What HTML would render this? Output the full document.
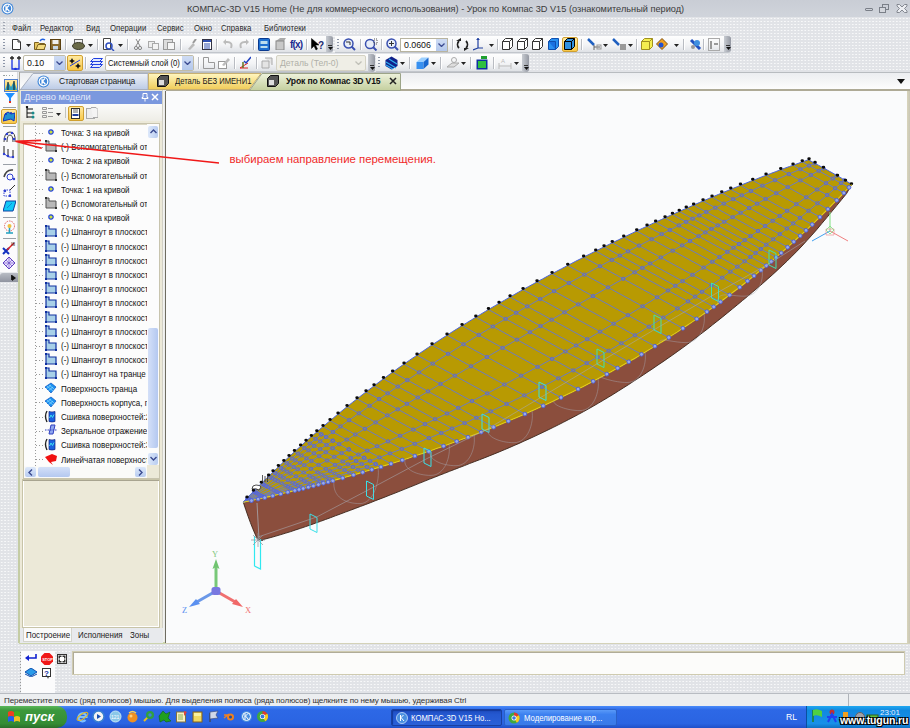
<!DOCTYPE html>
<html><head><meta charset="utf-8">
<style>
*{margin:0;padding:0;box-sizing:border-box}
html,body{width:910px;height:728px;overflow:hidden;background:#e7e9ec;font-family:"Liberation Sans",sans-serif;}
.a{position:absolute}
.tx{white-space:nowrap;line-height:1}
.pat{background-color:#e1e3e7;background-image:radial-gradient(rgba(255,255,255,.75) 0.8px,transparent 1.1px);background-size:3.4px 3px}
.tb{background:linear-gradient(#fefefe,#f3f4f6 55%,#dfe2e6);border-bottom:1px solid #c2c6cc;border-right:1px solid #c8ccd2;border-radius:0 3px 3px 0}
.row{position:absolute;left:61px;font-size:8.8px;color:#111;white-space:nowrap;line-height:1;transform:scaleX(.91);transform-origin:0 0}
</style></head><body>

<div class="a" style="left:0px;top:0px;width:910px;height:728px;background:#e8eaed"></div>
<div class="a pat" style="left:0;top:17px;width:910px;height:55px"></div>
<div class="a" style="left:0px;top:0px;width:910px;height:17px;background:linear-gradient(#c9cdd5,#d0d4db)"></div>
<svg class="a" style="left:1px;top:2px;" width="13" height="13" viewBox="0 0 13 13"><circle cx="6.5" cy="6.5" r="6" fill="#3f86d8"/><circle cx="6.5" cy="6.5" r="4.3" fill="none" stroke="#fff" stroke-width="1.2"/><path d="M5,3.5v6M5,6.5l3,-3M5.5,6l3,3.5" stroke="#fff" stroke-width="1.2" fill="none"/></svg>
<div class="a tx" style="left:187px;top:5px;font-size:9.2px;color:#3a3a3a">КОМПАС-3D V15 Home (Не для коммерческого использования) - Урок по Компас 3D V15 (ознакомительный период)</div>
<div class="a" style="left:865px;top:8px;width:8px;height:3px;border:1px solid #7a7f88;border-radius:1px"></div>
<svg class="a" style="left:879px;top:4px;" width="11" height="10" viewBox="0 0 11 10"><rect x="3.5" y="0.5" width="6" height="5" fill="none" stroke="#7a7f88"/><rect x="0.5" y="3.5" width="6" height="5" fill="#d3d6dc" stroke="#7a7f88"/></svg>
<svg class="a" style="left:896px;top:3px;" width="12" height="11" viewBox="0 0 12 11"><path d="M1,1.5h2.5l2.5,2.5 2.5-2.5h2.5v1.5l-2.5,2.5 2.5,2.5v1.5h-2.5l-2.5-2.5-2.5,2.5h-2.5v-1.5l2.5-2.5-2.5-2.5z" fill="#eceef2" stroke="#7a7f88" stroke-width="0.9"/></svg>
<div class="a" style="left:3px;top:22px;width:2px;height:10px;background:repeating-linear-gradient(#a0a6b2 0 1px,transparent 1px 3px)"></div>
<div class="a tx" style="left:12px;top:24px;font-size:9px;color:#2a2a2a;transform:scaleX(.86);transform-origin:0 0">Файл</div>
<div class="a tx" style="left:40px;top:24px;font-size:9px;color:#2a2a2a;transform:scaleX(.86);transform-origin:0 0">Редактор</div>
<div class="a tx" style="left:86px;top:24px;font-size:9px;color:#2a2a2a;transform:scaleX(.86);transform-origin:0 0">Вид</div>
<div class="a tx" style="left:110px;top:24px;font-size:9px;color:#2a2a2a;transform:scaleX(.86);transform-origin:0 0">Операции</div>
<div class="a tx" style="left:157px;top:24px;font-size:9px;color:#2a2a2a;transform:scaleX(.86);transform-origin:0 0">Сервис</div>
<div class="a tx" style="left:194px;top:24px;font-size:9px;color:#2a2a2a;transform:scaleX(.86);transform-origin:0 0">Окно</div>
<div class="a tx" style="left:221px;top:24px;font-size:9px;color:#2a2a2a;transform:scaleX(.86);transform-origin:0 0">Справка</div>
<div class="a tx" style="left:264px;top:24px;font-size:9px;color:#2a2a2a;transform:scaleX(.86);transform-origin:0 0">Библиотеки</div>
<div class="a tb" style="left:0;top:36px;width:333px;height:17px"></div>
<div class="a tb" style="left:335px;top:36px;width:396px;height:17px"></div>
<div class="a tb" style="left:0;top:54px;width:375px;height:18px"></div>
<div class="a tb" style="left:376px;top:54px;width:153px;height:18px"></div>
<div class="a" style="left:3px;top:39px;width:2px;height:12px;background:repeating-linear-gradient(#8d96a8 0 1px,transparent 1px 3px)"></div>
<div class="a" style="left:337px;top:39px;width:2px;height:12px;background:repeating-linear-gradient(#8d96a8 0 1px,transparent 1px 3px)"></div>
<div class="a" style="left:3px;top:57px;width:2px;height:12px;background:repeating-linear-gradient(#8d96a8 0 1px,transparent 1px 3px)"></div>
<div class="a" style="left:378px;top:57px;width:2px;height:12px;background:repeating-linear-gradient(#8d96a8 0 1px,transparent 1px 3px)"></div>
<div class="a" style="left:326px;top:36px;width:7px;height:16px;background:linear-gradient(90deg,#c8ccd2,#9498a2);border-radius:0 3px 3px 0"></div>
<div class="a" style="left:328px;top:45px;width:4px;height:1px;background:#333"></div>
<svg class="a" style="left:327.5px;top:47px;" width="5" height="3" viewBox="0 0 5 3"><path d="M0,0h5l-2.5,3z" fill="#111"/></svg>
<div class="a" style="left:724px;top:36px;width:7px;height:16px;background:linear-gradient(90deg,#c8ccd2,#9498a2);border-radius:0 3px 3px 0"></div>
<div class="a" style="left:726px;top:45px;width:4px;height:1px;background:#333"></div>
<svg class="a" style="left:725.5px;top:47px;" width="5" height="3" viewBox="0 0 5 3"><path d="M0,0h5l-2.5,3z" fill="#111"/></svg>
<div class="a" style="left:368px;top:54px;width:7px;height:18px;background:linear-gradient(90deg,#c8ccd2,#9498a2);border-radius:0 3px 3px 0"></div>
<div class="a" style="left:370px;top:65px;width:4px;height:1px;background:#333"></div>
<svg class="a" style="left:369.5px;top:67px;" width="5" height="3" viewBox="0 0 5 3"><path d="M0,0h5l-2.5,3z" fill="#111"/></svg>
<div class="a" style="left:522px;top:54px;width:7px;height:18px;background:linear-gradient(90deg,#c8ccd2,#9498a2);border-radius:0 3px 3px 0"></div>
<div class="a" style="left:524px;top:65px;width:4px;height:1px;background:#333"></div>
<svg class="a" style="left:523.5px;top:67px;" width="5" height="3" viewBox="0 0 5 3"><path d="M0,0h5l-2.5,3z" fill="#111"/></svg>
<svg class="a" style="left:12px;top:39px;" width="9" height="11" viewBox="0 0 9 11"><path d="M0.5,0.5h5.5l2.5,2.5v7.5h-8z" fill="#fff" stroke="#333"/><path d="M6,0.5v2.5h2.5" fill="none" stroke="#333"/></svg>
<svg class="a" style="left:26px;top:44px;" width="5" height="3" viewBox="0 0 5 3"><path d="M0,0h5l-2.5,3z" fill="#222"/></svg>
<svg class="a" style="left:34px;top:38px;" width="12" height="12" viewBox="0 0 12 12"><path d="M0.5,4.5h4l1,1h5v6h-10z" fill="#e8c860" stroke="#7a6020"/><path d="M2,11.5l2-5h8l-2,5z" fill="#f4dc80" stroke="#7a6020"/><path d="M6,3q2-3 5-1" stroke="#2060e0" stroke-width="1.5" fill="none"/></svg>
<svg class="a" style="left:50px;top:39px;" width="11" height="11" viewBox="0 0 11 11"><rect x="0.5" y="0.5" width="10" height="10" fill="#8a6a30" stroke="#5a4010"/><rect x="2.5" y="1" width="6" height="4" fill="#f0f0f0"/><rect x="3" y="7" width="5" height="3.5" fill="#c8d8e8"/></svg>
<div class="a" style="left:65px;top:39px;width:1px;height:11px;background:#b9bcc2;box-shadow:1px 0 0 #fff"></div>
<svg class="a" style="left:72px;top:39px;" width="13" height="11" viewBox="0 0 13 11"><rect x="2.5" y="0.5" width="8" height="4" fill="#eee" stroke="#666"/><ellipse cx="6.5" cy="7" rx="6" ry="3.5" fill="#6a6a48" stroke="#3a3a28"/></svg>
<svg class="a" style="left:88px;top:44px;" width="5" height="3" viewBox="0 0 5 3"><path d="M0,0h5l-2.5,3z" fill="#222"/></svg>
<div class="a" style="left:97px;top:39px;width:1px;height:11px;background:#b9bcc2;box-shadow:1px 0 0 #fff"></div>
<svg class="a" style="left:103px;top:38px;" width="12" height="13" viewBox="0 0 12 13"><path d="M0.5,0.5h7v11h-7z" fill="#fff" stroke="#444"/><circle cx="6" cy="8" r="3" fill="none" stroke="#3050c0" stroke-width="1.5"/><path d="M8,10l3,3" stroke="#3050c0" stroke-width="1.5"/></svg>
<svg class="a" style="left:118px;top:44px;" width="5" height="3" viewBox="0 0 5 3"><path d="M0,0h5l-2.5,3z" fill="#222"/></svg>
<div class="a" style="left:127px;top:39px;width:1px;height:11px;background:#b9bcc2;box-shadow:1px 0 0 #fff"></div>
<svg class="a" style="left:134px;top:39px;" width="8" height="11" viewBox="0 0 8 11"><path d="M2,0l4,7M6,0l-4,7" stroke="#888" stroke-width="1"/><circle cx="2" cy="9" r="1.6" fill="none" stroke="#888"/><circle cx="6" cy="9" r="1.6" fill="none" stroke="#888"/></svg>
<svg class="a" style="left:148px;top:39px;" width="11" height="11" viewBox="0 0 11 11"><rect x="0.5" y="2.5" width="6" height="6" fill="#eee" stroke="#aaa"/><rect x="4.5" y="4.5" width="6" height="6" fill="#f4f4f4" stroke="#aaa"/></svg>
<svg class="a" style="left:163px;top:38px;" width="12" height="12" viewBox="0 0 12 12"><rect x="0.5" y="1.5" width="9" height="10" fill="#ddd" stroke="#999"/><rect x="4.5" y="4.5" width="7" height="7" fill="#f6f6f6" stroke="#999"/></svg>
<div class="a" style="left:180px;top:39px;width:1px;height:11px;background:#b9bcc2;box-shadow:1px 0 0 #fff"></div>
<svg class="a" style="left:187px;top:39px;" width="10" height="11" viewBox="0 0 10 11"><path d="M1,10l5-6 2,2-5,5z" fill="#bbb"/><path d="M6,4l3-4" stroke="#999" stroke-width="2"/></svg>
<svg class="a" style="left:202px;top:39px;" width="10" height="11" viewBox="0 0 10 11"><rect x="0.5" y="0.5" width="9" height="10" fill="#fff" stroke="#334"/><rect x="1" y="1" width="8" height="2" fill="#3050b0"/><path d="M2,5h6M2,7h6M2,9h6" stroke="#3050b0"/></svg>
<div class="a" style="left:216px;top:39px;width:1px;height:11px;background:#b9bcc2;box-shadow:1px 0 0 #fff"></div>
<svg class="a" style="left:223px;top:39px;" width="10" height="10" viewBox="0 0 10 10"><path d="M8,9q2-6-4-6h-2" stroke="#bbb" stroke-width="2" fill="none"/><path d="M0,3l3-3v6z" fill="#bbb"/></svg>
<svg class="a" style="left:239px;top:39px;" width="10" height="10" viewBox="0 0 10 10"><path d="M2,9q-2-6 4-6h2" stroke="#bbb" stroke-width="2" fill="none"/><path d="M10,3l-3-3v6z" fill="#bbb"/></svg>
<div class="a" style="left:253px;top:39px;width:1px;height:11px;background:#b9bcc2;box-shadow:1px 0 0 #fff"></div>
<svg class="a" style="left:258px;top:38px;" width="12" height="13" viewBox="0 0 12 13"><rect x="0.5" y="0.5" width="11" height="12" rx="1" fill="#1e6fd0" stroke="#0a3a90"/><rect x="2.5" y="3" width="7" height="3" fill="#bde"/><rect x="2.5" y="8" width="7" height="2" fill="#bde"/></svg>
<svg class="a" style="left:275px;top:38px;" width="12" height="12" viewBox="0 0 12 12"><path d="M1,3l4-3h6l-2,3z" fill="#aaa"/><rect x="1" y="3" width="8" height="9" fill="#c8c8c8" stroke="#888"/></svg>
<div class="a tx" style="left:290px;top:40px;font-size:10px;color:#1a2a90;font-weight:bold;letter-spacing:-0.8px">f(x)</div>
<div class="a" style="left:306px;top:39px;width:1px;height:11px;background:#b9bcc2;box-shadow:1px 0 0 #fff"></div>
<svg class="a" style="left:311px;top:38px;" width="13" height="13" viewBox="0 0 13 13"><path d="M0.5,0.5v10l2.5-2.5 2,4 1.5-1-2-4h3.5z" fill="#000" stroke="#000" stroke-width="0.5"/><text x="7" y="11" font-size="10" font-weight="bold" fill="#1a2a70" font-family="Liberation Sans">?</text></svg>
<svg class="a" style="left:343px;top:38px;" width="13" height="13" viewBox="0 0 13 13"><circle cx="5.5" cy="5.5" r="4.5" fill="#e8eef8" stroke="#3a50b0" stroke-width="1.5"/><path d="M8.5,8.5l3.5,3.5" stroke="#3a50b0" stroke-width="2"/><path d="M3,4h4v3" stroke="#333" fill="none"/></svg>
<div class="a" style="left:360px;top:39px;width:1px;height:11px;background:#b9bcc2;box-shadow:1px 0 0 #fff"></div>
<svg class="a" style="left:364px;top:38px;" width="14" height="13" viewBox="0 0 14 13"><circle cx="6" cy="6" r="4.5" fill="#e8eef8" stroke="#3a50b0" stroke-width="1.5"/><path d="M9,9l3.5,3.5" stroke="#3a50b0" stroke-width="2"/><rect x="10" y="1" width="3" height="5" fill="none" stroke="#555" stroke-dasharray="1 1"/></svg>
<div class="a" style="left:381px;top:39px;width:1px;height:11px;background:#b9bcc2;box-shadow:1px 0 0 #fff"></div>
<svg class="a" style="left:386px;top:38px;" width="13" height="13" viewBox="0 0 13 13"><circle cx="5.5" cy="5.5" r="4.5" fill="#e8eef8" stroke="#3a50b0" stroke-width="1.5"/><path d="M8.5,8.5l3.5,3.5" stroke="#3a50b0" stroke-width="2"/><path d="M3,5.5h5M5.5,3v5" stroke="#333"/></svg>
<div class="a" style="left:400px;top:38px;width:48px;height:14px;background:#fff;border:1px solid #b8b4a0"></div>
<div class="a tx" style="left:404px;top:41px;font-size:8.8px;color:#111">0.0606</div>
<div class="a" style="left:436px;top:39px;width:11px;height:12px;background:linear-gradient(#cfdcf4,#b4c8ec)"></div>
<svg class="a" style="left:438px;top:43px;" width="7" height="4" viewBox="0 0 7 4"><path d="M0.5,0.5l3,3 3-3" stroke="#3a4a90" stroke-width="1.3" fill="none"/></svg>
<div class="a" style="left:452px;top:39px;width:1px;height:11px;background:#b9bcc2;box-shadow:1px 0 0 #fff"></div>
<svg class="a" style="left:456px;top:38px;" width="13" height="13" viewBox="0 0 13 13"><path d="M3,3a5,5 0 0,0 0,7M10,3a5,5 0 0,1 0,7" stroke="#222" stroke-width="1.8" fill="none"/><path d="M0,3h5v-3zM13,10h-5v3z" fill="#222"/></svg>
<svg class="a" style="left:473px;top:38px;" width="10" height="13" viewBox="0 0 10 13"><path d="M5,0v10M5,10l-5,2M5,10h5" stroke="#2040a0" stroke-width="1.2"/><path d="M3,2l2-2 2,2z" fill="#2040a0"/></svg>
<svg class="a" style="left:489px;top:44px;" width="5" height="3" viewBox="0 0 5 3"><path d="M0,0h5l-2.5,3z" fill="#222"/></svg>
<div class="a" style="left:497px;top:39px;width:1px;height:11px;background:#b9bcc2;box-shadow:1px 0 0 #fff"></div>
<svg class="a" style="left:502px;top:38px;" width="11" height="12" viewBox="0 0 11 12"><path d="M0.5,3.5l3-3h7v8l-3,3h-7z M0.5,3.5h7v8M7.5,3.5l3-3" fill="#fff" stroke="#333"/></svg>
<svg class="a" style="left:517px;top:38px;" width="11" height="12" viewBox="0 0 11 12"><path d="M0.5,3.5l3-3h7v8l-3,3h-7z M0.5,3.5h7v8M7.5,3.5l3-3" fill="#fff" stroke="#333"/></svg>
<svg class="a" style="left:532px;top:38px;" width="11" height="12" viewBox="0 0 11 12"><path d="M0.5,3.5l3-3h7v8l-3,3h-7z M0.5,3.5h7v8M7.5,3.5l3-3" fill="#fff" stroke="#333"/></svg>
<svg class="a" style="left:548px;top:38px;" width="11" height="12" viewBox="0 0 11 12"><path d="M0.5,3.5l3-3h7v8l-3,3h-7z" fill="#2a90f0" stroke="#1050b0"/><path d="M0.5,3.5h7v8" fill="#1a70e0" stroke="#1050b0"/></svg>
<div class="a" style="left:562px;top:37px;width:16px;height:15px;background:linear-gradient(#ffe9a0,#f8c848);border:1px solid #d0a030;border-radius:2px"></div>
<svg class="a" style="left:564px;top:38px;" width="12" height="12" viewBox="0 0 12 12"><path d="M0.5,3.5l3-3h7v8l-3,3h-7z" fill="#3090e0" stroke="#000"/><path d="M0.5,3.5h7v8M7.5,3.5l3-3" fill="none" stroke="#000"/></svg>
<div class="a" style="left:581px;top:39px;width:1px;height:11px;background:#b9bcc2;box-shadow:1px 0 0 #fff"></div>
<svg class="a" style="left:587px;top:38px;" width="15" height="13" viewBox="0 0 15 13"><path d="M1,1l6,6" stroke="#2060c0" stroke-width="2.5"/><path d="M7,7v5M7,9h6" stroke="#666"/><rect x="10" y="7" width="4" height="4" fill="none" stroke="#999"/></svg>
<svg class="a" style="left:603px;top:44px;" width="5" height="3" viewBox="0 0 5 3"><path d="M0,0h5l-2.5,3z" fill="#222"/></svg>
<svg class="a" style="left:612px;top:38px;" width="15" height="13" viewBox="0 0 15 13"><path d="M1,1l6,6" stroke="#2060c0" stroke-width="2.5"/><rect x="8" y="6" width="6" height="6" fill="#999"/></svg>
<svg class="a" style="left:628px;top:44px;" width="5" height="3" viewBox="0 0 5 3"><path d="M0,0h5l-2.5,3z" fill="#222"/></svg>
<div class="a" style="left:636px;top:39px;width:1px;height:11px;background:#b9bcc2;box-shadow:1px 0 0 #fff"></div>
<svg class="a" style="left:641px;top:38px;" width="12" height="12" viewBox="0 0 12 12"><path d="M0.5,3.5l3-3h8v8l-3,3h-8z" fill="#f4ee50" stroke="#a09020"/><path d="M0.5,3.5h8v8M8.5,3.5l3-3" fill="none" stroke="#a09020"/></svg>
<svg class="a" style="left:656px;top:38px;" width="12" height="12" viewBox="0 0 12 12"><path d="M0.5,6l5.5-5.5 5.5,5.5-5.5,5.5z" fill="#f0a020" stroke="#805010"/><circle cx="5" cy="7" r="2.5" fill="#2050d0"/></svg>
<svg class="a" style="left:674px;top:44px;" width="5" height="3" viewBox="0 0 5 3"><path d="M0,0h5l-2.5,3z" fill="#222"/></svg>
<div class="a" style="left:683px;top:39px;width:1px;height:11px;background:#b9bcc2;box-shadow:1px 0 0 #fff"></div>
<svg class="a" style="left:689px;top:38px;" width="13" height="13" viewBox="0 0 13 13"><path d="M2,2l9,9" stroke="#2050c0" stroke-width="3"/><circle cx="8" cy="5" r="3" fill="#4090e0"/><circle cx="4" cy="9" r="2" fill="#999"/></svg>
<div class="a" style="left:703px;top:39px;width:1px;height:11px;background:#b9bcc2;box-shadow:1px 0 0 #fff"></div>
<svg class="a" style="left:708px;top:38px;" width="12" height="13" viewBox="0 0 12 13"><rect x="0.5" y="0.5" width="11" height="12" fill="none" stroke="#aaa"/><path d="M3,3v8M6,6h4" stroke="#999" stroke-width="2"/></svg>
<svg class="a" style="left:10px;top:56px;" width="11" height="14" viewBox="0 0 11 14"><path d="M2,0v4M0,2h4M9,0v4M7,2h4" stroke="#222" stroke-width="1.3"/><path d="M2,4v9h7v-9" stroke="#1830e0" stroke-width="1.3" fill="none"/><circle cx="5.5" cy="13" r="1.3" fill="#1830e0"/></svg>
<div class="a" style="left:23px;top:55px;width:43px;height:16px;background:#fdfdfd;border:1px solid #c0bca8;border-radius:2px"></div>
<div class="a tx" style="left:27px;top:59px;font-size:8.8px;color:#111">0.10</div>
<div class="a" style="left:54px;top:56px;width:11px;height:14px;background:linear-gradient(#cfdcf4,#b4c8ec)"></div>
<svg class="a" style="left:56px;top:61px;" width="7" height="4" viewBox="0 0 7 4"><path d="M0.5,0.5l3,3 3-3" stroke="#3a4a90" stroke-width="1.3" fill="none"/></svg>
<div class="a" style="left:67px;top:55px;width:16px;height:16px;background:linear-gradient(#ffe9a0,#f8c848);border:1px solid #d0a030;border-radius:2px"></div>
<svg class="a" style="left:69px;top:57px;" width="12" height="12" viewBox="0 0 12 12"><path d="M1,9L11,3" stroke="#2040e0" stroke-width="1"/><path d="M3,1l1,2 2,1-2,1-1,2-1-2-2-1 2-1zM9,6l1,2 2,1-2,1-1,2-1-2-2-1 2-1z" fill="#111"/></svg>
<div class="a" style="left:85px;top:57px;width:1px;height:12px;background:#b9bcc2;box-shadow:1px 0 0 #fff"></div>
<svg class="a" style="left:90px;top:57px;" width="13" height="12" viewBox="0 0 13 12"><path d="M0.5,4.5l3-3h9l-3,3zM0.5,7.5l3-3h9l-3,3zM0.5,10.5l3-3h9l-3,3z" fill="#e0e8ff" stroke="#2040e0"/></svg>
<div class="a" style="left:105px;top:55px;width:89px;height:16px;background:#fdfdfd;border:1px solid #c0bca8;border-radius:2px"></div>
<div class="a tx" style="left:108px;top:59px;font-size:8.6px;color:#111;transform:scaleX(.9);transform-origin:0 0">Системный слой (0)</div>
<div class="a" style="left:182px;top:56px;width:11px;height:14px;background:linear-gradient(#cfdcf4,#b4c8ec)"></div>
<svg class="a" style="left:184px;top:61px;" width="7" height="4" viewBox="0 0 7 4"><path d="M0.5,0.5l3,3 3-3" stroke="#3a4a90" stroke-width="1.3" fill="none"/></svg>
<div class="a" style="left:198px;top:57px;width:1px;height:12px;background:#b9bcc2;box-shadow:1px 0 0 #fff"></div>
<svg class="a" style="left:203px;top:57px;" width="12" height="12" viewBox="0 0 12 12"><path d="M0.5,11.5v-11h5v5h6v6z" fill="none" stroke="#999"/></svg>
<svg class="a" style="left:218px;top:57px;" width="12" height="12" viewBox="0 0 12 12"><rect x="0.5" y="4.5" width="8" height="7" fill="#fff" stroke="#999"/><path d="M4,8l6-7 2,2-6,6z" fill="#bbb"/></svg>
<div class="a" style="left:234px;top:57px;width:1px;height:12px;background:#b9bcc2;box-shadow:1px 0 0 #fff"></div>
<svg class="a" style="left:239px;top:56px;" width="12" height="13" viewBox="0 0 12 13"><path d="M1,12h8M1,12l8-5M4,12v-6" stroke="#e02020"/><path d="M4,12v-6" stroke="#20a020"/><path d="M5,5l2,2 5-6" stroke="#2040c0" stroke-width="1.5" fill="none"/></svg>
<div class="a" style="left:256px;top:57px;width:1px;height:12px;background:#b9bcc2;box-shadow:1px 0 0 #fff"></div>
<svg class="a" style="left:261px;top:57px;" width="12" height="12" viewBox="0 0 12 12"><path d="M1,4h7v7h-7zM4,1h7v7" fill="#e4e4e4" stroke="#aaa"/></svg>
<div class="a" style="left:276px;top:55px;width:90px;height:16px;background:#efeee6;border:1px solid #d4d2c4;border-radius:2px"></div>
<div class="a tx" style="left:280px;top:59px;font-size:8.6px;color:#b0b0a8">Деталь (Тел-0)</div>
<svg class="a" style="left:355px;top:61px;" width="7" height="4" viewBox="0 0 7 4"><path d="M0.5,0.5l3,3 3-3" stroke="#c0c0b8" stroke-width="1.3" fill="none"/></svg>
<svg class="a" style="left:385px;top:56px;" width="13" height="14" viewBox="0 0 13 14"><path d="M0.5,4l6-3.5 6,3.5v6l-6,3.5-6-3.5z" fill="#10208a"/><path d="M1,6l10,6M1,9l7,4M4,3l8,5" stroke="#30b0f0" stroke-width="1.2"/></svg>
<svg class="a" style="left:400px;top:62px;" width="5" height="3" viewBox="0 0 5 3"><path d="M0,0h5l-2.5,3z" fill="#222"/></svg>
<div class="a" style="left:409px;top:57px;width:1px;height:12px;background:#b9bcc2;box-shadow:1px 0 0 #fff"></div>
<svg class="a" style="left:416px;top:57px;" width="13" height="12" viewBox="0 0 13 12"><path d="M0.5,5l5-4.5h7l-5,4.5z" fill="#9cd0ff"/><path d="M0.5,5h7v7h-7z" fill="#3890f0"/><path d="M7.5,5l5-4.5v7l-5,4.5z" fill="#1868d0"/></svg>
<svg class="a" style="left:431px;top:62px;" width="5" height="3" viewBox="0 0 5 3"><path d="M0,0h5l-2.5,3z" fill="#222"/></svg>
<div class="a" style="left:440px;top:57px;width:1px;height:12px;background:#b9bcc2;box-shadow:1px 0 0 #fff"></div>
<svg class="a" style="left:446px;top:57px;" width="14" height="12" viewBox="0 0 14 12"><path d="M1,10l5-4h7l-5,4z" fill="#ddd" stroke="#aaa"/><circle cx="8" cy="3" r="2.5" fill="none" stroke="#aaa"/></svg>
<svg class="a" style="left:461px;top:62px;" width="5" height="3" viewBox="0 0 5 3"><path d="M0,0h5l-2.5,3z" fill="#222"/></svg>
<div class="a" style="left:470px;top:57px;width:1px;height:12px;background:#b9bcc2;box-shadow:1px 0 0 #fff"></div>
<svg class="a" style="left:476px;top:56px;" width="13" height="14" viewBox="0 0 13 14"><rect x="0.5" y="3.5" width="11" height="10" fill="#1030a0"/><rect x="2" y="5" width="8" height="7" fill="#30c040"/><path d="M5,0v3h6v-3" fill="#20a030"/></svg>
<div class="a" style="left:493px;top:57px;width:1px;height:12px;background:#b9bcc2;box-shadow:1px 0 0 #fff"></div>
<svg class="a" style="left:498px;top:56px;" width="14" height="14" viewBox="0 0 14 14"><path d="M1,7v6M13,7v6M1,10h12" stroke="#bbb"/><text x="3" y="7" font-size="6" fill="#bbb" font-family="Liberation Sans">A</text></svg>
<svg class="a" style="left:514px;top:62px;" width="5" height="3" viewBox="0 0 5 3"><path d="M0,0h5l-2.5,3z" fill="#222"/></svg>
<div class="a" style="left:19px;top:72px;width:891px;height:19px;background:linear-gradient(#eceef1,#f4f5f6 50%,#fdfdfd);border-top:1px solid #b8bcc0;border-bottom:2px solid #aeaa96"></div>
<div class="a" style="left:19px;top:72px;width:1px;height:571px;background:#a8a69a"></div>
<svg class="a" style="left:20px;top:72px;" width="130" height="18" viewBox="0 0 130 18"><defs><linearGradient id="g1" x1="0" y1="0" x2="0" y2="1"><stop offset="0" stop-color="#f0f3f8"/><stop offset="1" stop-color="#bccbe6"/></linearGradient></defs><path d="M0.5,17.5L13,1.5h115v16z" fill="url(#g1)" stroke="#a8b0c0"/></svg>
<svg class="a" style="left:37px;top:75px;" width="13" height="13" viewBox="0 0 13 13"><circle cx="6.5" cy="6.5" r="6" fill="#3f86d8"/><circle cx="6.5" cy="6.5" r="4.3" fill="none" stroke="#fff" stroke-width="1.2"/><path d="M5,3.5v6M5,6.5l3,-3M5.5,6l3,3.5" stroke="#fff" stroke-width="1.2" fill="none"/></svg>
<div class="a tx" style="left:59px;top:77px;font-size:8.5px;color:#1a1a1a;letter-spacing:-0.25px">Стартовая страница</div>
<svg class="a" style="left:148px;top:72px;" width="114" height="18" viewBox="0 0 114 18"><defs><linearGradient id="g2" x1="0" y1="0" x2="0" y2="1"><stop offset="0" stop-color="#fff6c0"/><stop offset="1" stop-color="#f0cc58"/></linearGradient></defs><path d="M0.5,17.5V1.5h112.5l-12,16z" fill="url(#g2)" stroke="#c8b070"/></svg>
<svg class="a" style="left:157px;top:75px;" width="12" height="12" viewBox="0 0 12 12"><path d="M0.5,3.5l3-3h8v8l-3,3h-8z" fill="#555" stroke="#111"/><rect x="2" y="5" width="5" height="5" fill="#ddd"/></svg>
<div class="a tx" style="left:175px;top:77px;font-size:8.5px;color:#1a1a1a;transform:scaleX(.9);transform-origin:0 0">Деталь БЕЗ ИМЕНИ1</div>
<svg class="a" style="left:249px;top:72px;" width="153" height="19" viewBox="0 0 153 19"><defs><linearGradient id="g3" x1="0" y1="0" x2="0" y2="1"><stop offset="0" stop-color="#eef2dc"/><stop offset="1" stop-color="#c4cf9e"/></linearGradient></defs><path d="M0.5,18.5L13,1.5h138.5v17z" fill="url(#g3)" stroke="#9ca488"/></svg>
<svg class="a" style="left:267px;top:75px;" width="12" height="12" viewBox="0 0 12 12"><path d="M0.5,3.5l3-3h8v8l-3,3h-8z" fill="#555" stroke="#111"/><rect x="2" y="5" width="5" height="5" fill="#ddd"/></svg>
<div class="a tx" style="left:286px;top:77px;font-size:8.6px;color:#111;font-weight:bold;letter-spacing:-0.15px">Урок по Компас 3D V15</div>
<svg class="a" style="left:389px;top:77px;" width="8" height="8" viewBox="0 0 8 8"><path d="M1,1l6,6M7,1l-6,6" stroke="#222" stroke-width="1.5"/></svg>
<svg class="a" style="left:897px;top:79px;" width="8" height="5" viewBox="0 0 8 5"><path d="M0,0h8l-4,5z" fill="#111"/></svg>
<div class="a" style="left:0px;top:72px;width:18px;height:200px;background:#fbfbfc;border-right:1px solid #d8dade"></div>
<div class="a" style="left:3px;top:75px;width:2px;height:1px;background:repeating-linear-gradient(#999 0 1px,transparent 1px 3px)"></div>
<div class="a" style="left:3px;top:75px;width:12px;height:1px;background:repeating-linear-gradient(90deg,#9aa 0 1px,transparent 1px 3px)"></div>
<div class="a" style="left:4px;top:79px;width:14px;height:13px;background:linear-gradient(#ffe9a0,#f8c848);border:1px solid #5080d0"></div>
<svg class="a" style="left:5px;top:80px;" width="12" height="11" viewBox="0 0 12 11"><path d="M0,10l3-8 3,5 3-6 3,9z" fill="#30a0c0"/><path d="M3,2v8M9,1v9" stroke="#111"/></svg>
<svg class="a" style="left:5px;top:93px;" width="10" height="10" viewBox="0 0 10 10"><path d="M0,0h10l-4,5v3h-2v-3z" fill="#1e90ff"/><rect x="4" y="8" width="2" height="2" fill="#e03020"/></svg>
<div class="a" style="left:3px;top:107px;width:13px;height:1px;background:#9aa0a8"></div>
<div class="a" style="left:3px;top:126px;width:13px;height:1px;background:#9aa0a8"></div>
<div class="a" style="left:3px;top:164px;width:13px;height:1px;background:#9aa0a8"></div>
<div class="a" style="left:3px;top:217px;width:13px;height:1px;background:#9aa0a8"></div>
<div class="a" style="left:3px;top:238px;width:13px;height:1px;background:#9aa0a8"></div>
<div class="a" style="left:1px;top:109px;width:16px;height:15px;background:linear-gradient(#ffe9a0,#f8c848);border:1px solid #d0a030;border-radius:2px"></div>
<svg class="a" style="left:3px;top:111px;" width="12" height="11" viewBox="0 0 12 11"><path d="M0,10l2-7 3-2 3,2 4-1-1,8-3-2-4,1z" fill="#2090d0" stroke="#1030c0"/><circle cx="3" cy="3" r="1" fill="#1030c0"/><circle cx="8" cy="2" r="1" fill="#1030c0"/></svg>
<svg class="a" style="left:3px;top:130px;" width="13" height="13" viewBox="0 0 13 13"><path d="M1,12q0-10 6-10t5,10" fill="none" stroke="#444"/><path d="M4,12q0-7 3-7t3,7" fill="none" stroke="#444"/><circle cx="4" cy="4" r="1.3" fill="#3040d0"/><circle cx="9" cy="3" r="1.3" fill="#3040d0"/><circle cx="2" cy="9" r="1.3" fill="#3040d0"/><circle cx="11" cy="9" r="1.3" fill="#3040d0"/></svg>
<svg class="a" style="left:2px;top:146px;" width="14" height="13" viewBox="0 0 14 13"><path d="M2,0v7M6,3v7M11,4v7" stroke="#222"/><path d="M2,7q3,5 9,4" fill="none" stroke="#3040d0"/><circle cx="2" cy="8" r="1.2" fill="#3040d0"/><circle cx="6" cy="10" r="1.2" fill="#3040d0"/><circle cx="11" cy="11" r="1.2" fill="#3040d0"/></svg>
<svg class="a" style="left:3px;top:168px;" width="13" height="13" viewBox="0 0 13 13"><path d="M1,9q2-8 9-7" fill="none" stroke="#444" stroke-width="1.5"/><circle cx="7" cy="9" r="3" fill="none" stroke="#3040d0"/><circle cx="11" cy="11" r="1.2" fill="#3040d0"/></svg>
<svg class="a" style="left:3px;top:184px;" width="13" height="13" viewBox="0 0 13 13"><rect x="1" y="6" width="6" height="6" fill="none" stroke="#3040d0" stroke-dasharray="1.5 1"/><path d="M7,6l5-5" stroke="#333"/><circle cx="2" cy="7" r="1.2" fill="#3040d0"/><circle cx="7" cy="12" r="1.2" fill="#3040d0"/></svg>
<svg class="a" style="left:3px;top:200px;" width="13" height="12" viewBox="0 0 13 12"><path d="M3,1h10l-3,10h-10z" fill="#10c8f8" stroke="#1040a0"/><path d="M4,8l5-5" stroke="#1060c0" stroke-width="0.6"/></svg>
<svg class="a" style="left:3px;top:220px;" width="13" height="14" viewBox="0 0 13 14"><circle cx="6.5" cy="6" r="5" fill="none" stroke="#e06060" stroke-dasharray="1.5 1"/><path d="M6.5,6v7M3,13h7" stroke="#20a0c0" stroke-width="1.5"/><circle cx="6.5" cy="6" r="2" fill="#f0c040"/></svg>
<svg class="a" style="left:2px;top:241px;" width="14" height="14" viewBox="0 0 14 14"><path d="M1,13l6-6M1,7l6,6" stroke="#1030c0" stroke-width="2"/><path d="M5,9l7-7" stroke="#e02020" stroke-width="1.5"/><text x="9" y="5" font-size="5" fill="#111" font-family="Liberation Sans">III</text></svg>
<svg class="a" style="left:2px;top:256px;" width="14" height="14" viewBox="0 0 14 14"><path d="M7,1l6,6-6,6-6-6z" fill="#e8e0ff" stroke="#6040c0"/><path d="M4,4l6,6M10,4l-6,6M7,1v12M1,7h12" stroke="#6040c0" stroke-width="0.6"/></svg>
<div class="a pat" style="left:0;top:282px;width:18px;height:362px"></div>
<div class="a" style="left:0px;top:273px;width:18px;height:9px;background:linear-gradient(#b8bcc4,#9094a0);border-radius:3px 0 0 0"></div>
<div class="a" style="left:11px;top:275px;width:1px;height:5px;background:#222"></div>
<svg class="a" style="left:12px;top:275px;" width="5" height="6" viewBox="0 0 5 6"><path d="M0,0l4,3-4,3z" fill="#111"/></svg>
<div class="a" style="left:20px;top:90px;width:145px;height:553px;background:#ece9d8"></div>
<div class="a" style="left:18px;top:90px;width:2px;height:553px;background:#c4cca4"></div>
<div class="a" style="left:162px;top:90px;width:4px;height:553px;background:linear-gradient(90deg,#b8b6a8,#f4f4f0 30%,#e0e2e6)"></div>
<div class="a" style="left:21px;top:91px;width:141px;height:13px;background:#7b98de"></div>
<div class="a tx" style="left:24px;top:93px;font-size:9.3px;color:#e4eafa">Дерево модели</div>
<svg class="a" style="left:141px;top:93px;" width="8" height="9" viewBox="0 0 8 9"><path d="M2,0.5h4v4h1v1h-6v-1h1zM4,5.5v3" stroke="#fff" fill="none"/></svg>
<svg class="a" style="left:151px;top:93px;" width="8" height="8" viewBox="0 0 8 8"><path d="M1,1l6,6M7,1l-6,6" stroke="#fff" stroke-width="1.5"/></svg>
<div class="a" style="left:21px;top:104px;width:141px;height:17px;background:linear-gradient(#fbfbfa,#eeede6)"></div>
<svg class="a" style="left:25px;top:106px;" width="10" height="13" viewBox="0 0 10 13"><path d="M2,1v11M2,3h6M2,7h6M2,11h6" stroke="#111"/><circle cx="8" cy="7" r="1.5" fill="#1a8a8a"/><circle cx="8" cy="11" r="1.5" fill="#1a8a8a"/><circle cx="2" cy="1" r="1.2" fill="#111"/></svg>
<svg class="a" style="left:42px;top:107px;" width="12" height="12" viewBox="0 0 12 12"><path d="M0.5,0.5h4v2h-4zM0.5,4.5h4v2h-4zM0.5,8.5h4v2h-4zM6,1.5h5M6,5.5h5M6,9.5h5" stroke="#999" fill="none"/></svg>
<svg class="a" style="left:56px;top:113px;" width="5" height="3" viewBox="0 0 5 3"><path d="M0,0h5l-2.5,3z" fill="#222"/></svg>
<div class="a" style="left:65px;top:107px;width:1px;height:11px;background:#c4c4bc"></div>
<div class="a" style="left:68px;top:106px;width:16px;height:15px;background:linear-gradient(#ffe9a0,#f8c848);border:1px solid #d0a030;border-radius:2px"></div>
<svg class="a" style="left:71px;top:108px;" width="9" height="11" viewBox="0 0 9 11"><rect x="0.5" y="0.5" width="8" height="10" fill="#fff" stroke="#333"/><rect x="1.5" y="6" width="6" height="2" fill="#2040a0"/><path d="M2,2h5M2,4h5" stroke="#666"/></svg>
<svg class="a" style="left:86px;top:107px;" width="12" height="12" viewBox="0 0 12 12"><rect x="0.5" y="1.5" width="8" height="10" fill="#eee" stroke="#aaa"/><path d="M5,0.5h5l2,2v8h-5" fill="#f4f4f4" stroke="#aaa"/></svg>
<div class="a" style="left:23px;top:123px;width:137px;height:356px;background:#fcfcfc;border:1px solid #c8c4ae;box-shadow:inset 0 1px 0 #dcd8c4"></div>
<div class="a" style="left:35px;top:123px;width:1px;height:343px;background:repeating-linear-gradient(#9a9a9a 0 1px,transparent 1px 3px)"></div>
<div class="a" style="left:36px;top:132.5px;width:9px;height:1px;background:repeating-linear-gradient(90deg,#9a9a9a 0 1px,transparent 1px 3px)"></div>
<svg class="a" style="left:48px;top:129px;" width="6" height="6" viewBox="0 0 6 6"><circle cx="3" cy="3" r="2.2" fill="#c8e040" stroke="#2040e0" stroke-width="1.2"/></svg>
<div class="row" style="top:128.9px">Точка: 3 на кривой</div>
<div class="a" style="left:36px;top:146.7px;width:9px;height:1px;background:repeating-linear-gradient(90deg,#9a9a9a 0 1px,transparent 1px 3px)"></div>
<svg class="a" style="left:45px;top:140px;" width="12" height="12" viewBox="0 0 12 12"><path d="M1,1h3v3h7v7h-10z" fill="#b8b8b8" stroke="#555"/><rect x="0" y="0" width="2" height="2" fill="#333"/><rect x="10" y="10" width="2" height="2" fill="#333"/></svg>
<div class="row" style="top:143.1px">(-) Вспомогательный от</div>
<div class="a" style="left:36px;top:160.9px;width:9px;height:1px;background:repeating-linear-gradient(90deg,#9a9a9a 0 1px,transparent 1px 3px)"></div>
<svg class="a" style="left:48px;top:157px;" width="6" height="6" viewBox="0 0 6 6"><circle cx="3" cy="3" r="2.2" fill="#c8e040" stroke="#2040e0" stroke-width="1.2"/></svg>
<div class="row" style="top:157.3px">Точка: 2 на кривой</div>
<div class="a" style="left:36px;top:175.1px;width:9px;height:1px;background:repeating-linear-gradient(90deg,#9a9a9a 0 1px,transparent 1px 3px)"></div>
<svg class="a" style="left:45px;top:169px;" width="12" height="12" viewBox="0 0 12 12"><path d="M1,1h3v3h7v7h-10z" fill="#b8b8b8" stroke="#555"/><rect x="0" y="0" width="2" height="2" fill="#333"/><rect x="10" y="10" width="2" height="2" fill="#333"/></svg>
<div class="row" style="top:171.5px">(-) Вспомогательный от</div>
<div class="a" style="left:36px;top:189.3px;width:9px;height:1px;background:repeating-linear-gradient(90deg,#9a9a9a 0 1px,transparent 1px 3px)"></div>
<svg class="a" style="left:48px;top:186px;" width="6" height="6" viewBox="0 0 6 6"><circle cx="3" cy="3" r="2.2" fill="#c8e040" stroke="#2040e0" stroke-width="1.2"/></svg>
<div class="row" style="top:185.7px">Точка: 1 на кривой</div>
<div class="a" style="left:36px;top:203.5px;width:9px;height:1px;background:repeating-linear-gradient(90deg,#9a9a9a 0 1px,transparent 1px 3px)"></div>
<svg class="a" style="left:45px;top:197px;" width="12" height="12" viewBox="0 0 12 12"><path d="M1,1h3v3h7v7h-10z" fill="#b8b8b8" stroke="#555"/><rect x="0" y="0" width="2" height="2" fill="#333"/><rect x="10" y="10" width="2" height="2" fill="#333"/></svg>
<div class="row" style="top:199.9px">(-) Вспомогательный от</div>
<div class="a" style="left:36px;top:217.7px;width:9px;height:1px;background:repeating-linear-gradient(90deg,#9a9a9a 0 1px,transparent 1px 3px)"></div>
<svg class="a" style="left:48px;top:214px;" width="6" height="6" viewBox="0 0 6 6"><circle cx="3" cy="3" r="2.2" fill="#c8e040" stroke="#2040e0" stroke-width="1.2"/></svg>
<div class="row" style="top:214.1px">Точка: 0 на кривой</div>
<div class="a" style="left:36px;top:231.9px;width:9px;height:1px;background:repeating-linear-gradient(90deg,#9a9a9a 0 1px,transparent 1px 3px)"></div>
<svg class="a" style="left:45px;top:225px;" width="12" height="12" viewBox="0 0 12 12"><path d="M1,1h3v3h7v7h-10z" fill="#a8d0e8" stroke="#1030a0" stroke-width="1.2"/><rect x="0" y="0" width="2" height="2" fill="#1030a0"/><rect x="10" y="10" width="2" height="2" fill="#1030a0"/><rect x="0" y="10" width="2" height="2" fill="#1030a0"/></svg>
<div class="row" style="top:228.3px">(-) Шпангоут в плоскост</div>
<div class="a" style="left:36px;top:246.1px;width:9px;height:1px;background:repeating-linear-gradient(90deg,#9a9a9a 0 1px,transparent 1px 3px)"></div>
<svg class="a" style="left:45px;top:240px;" width="12" height="12" viewBox="0 0 12 12"><path d="M1,1h3v3h7v7h-10z" fill="#a8d0e8" stroke="#1030a0" stroke-width="1.2"/><rect x="0" y="0" width="2" height="2" fill="#1030a0"/><rect x="10" y="10" width="2" height="2" fill="#1030a0"/><rect x="0" y="10" width="2" height="2" fill="#1030a0"/></svg>
<div class="row" style="top:242.5px">(-) Шпангоут в плоскост</div>
<div class="a" style="left:36px;top:260.3px;width:9px;height:1px;background:repeating-linear-gradient(90deg,#9a9a9a 0 1px,transparent 1px 3px)"></div>
<svg class="a" style="left:45px;top:254px;" width="12" height="12" viewBox="0 0 12 12"><path d="M1,1h3v3h7v7h-10z" fill="#a8d0e8" stroke="#1030a0" stroke-width="1.2"/><rect x="0" y="0" width="2" height="2" fill="#1030a0"/><rect x="10" y="10" width="2" height="2" fill="#1030a0"/><rect x="0" y="10" width="2" height="2" fill="#1030a0"/></svg>
<div class="row" style="top:256.7px">(-) Шпангоут в плоскост</div>
<div class="a" style="left:36px;top:274.5px;width:9px;height:1px;background:repeating-linear-gradient(90deg,#9a9a9a 0 1px,transparent 1px 3px)"></div>
<svg class="a" style="left:45px;top:268px;" width="12" height="12" viewBox="0 0 12 12"><path d="M1,1h3v3h7v7h-10z" fill="#a8d0e8" stroke="#1030a0" stroke-width="1.2"/><rect x="0" y="0" width="2" height="2" fill="#1030a0"/><rect x="10" y="10" width="2" height="2" fill="#1030a0"/><rect x="0" y="10" width="2" height="2" fill="#1030a0"/></svg>
<div class="row" style="top:270.9px">(-) Шпангоут в плоскост</div>
<div class="a" style="left:36px;top:288.7px;width:9px;height:1px;background:repeating-linear-gradient(90deg,#9a9a9a 0 1px,transparent 1px 3px)"></div>
<svg class="a" style="left:45px;top:282px;" width="12" height="12" viewBox="0 0 12 12"><path d="M1,1h3v3h7v7h-10z" fill="#a8d0e8" stroke="#1030a0" stroke-width="1.2"/><rect x="0" y="0" width="2" height="2" fill="#1030a0"/><rect x="10" y="10" width="2" height="2" fill="#1030a0"/><rect x="0" y="10" width="2" height="2" fill="#1030a0"/></svg>
<div class="row" style="top:285.1px">(-) Шпангоут в плоскост</div>
<div class="a" style="left:36px;top:302.9px;width:9px;height:1px;background:repeating-linear-gradient(90deg,#9a9a9a 0 1px,transparent 1px 3px)"></div>
<svg class="a" style="left:45px;top:296px;" width="12" height="12" viewBox="0 0 12 12"><path d="M1,1h3v3h7v7h-10z" fill="#a8d0e8" stroke="#1030a0" stroke-width="1.2"/><rect x="0" y="0" width="2" height="2" fill="#1030a0"/><rect x="10" y="10" width="2" height="2" fill="#1030a0"/><rect x="0" y="10" width="2" height="2" fill="#1030a0"/></svg>
<div class="row" style="top:299.3px">(-) Шпангоут в плоскост</div>
<div class="a" style="left:36px;top:317.1px;width:9px;height:1px;background:repeating-linear-gradient(90deg,#9a9a9a 0 1px,transparent 1px 3px)"></div>
<svg class="a" style="left:45px;top:311px;" width="12" height="12" viewBox="0 0 12 12"><path d="M1,1h3v3h7v7h-10z" fill="#a8d0e8" stroke="#1030a0" stroke-width="1.2"/><rect x="0" y="0" width="2" height="2" fill="#1030a0"/><rect x="10" y="10" width="2" height="2" fill="#1030a0"/><rect x="0" y="10" width="2" height="2" fill="#1030a0"/></svg>
<div class="row" style="top:313.5px">(-) Шпангоут в плоскост</div>
<div class="a" style="left:36px;top:331.3px;width:9px;height:1px;background:repeating-linear-gradient(90deg,#9a9a9a 0 1px,transparent 1px 3px)"></div>
<svg class="a" style="left:45px;top:325px;" width="12" height="12" viewBox="0 0 12 12"><path d="M1,1h3v3h7v7h-10z" fill="#a8d0e8" stroke="#1030a0" stroke-width="1.2"/><rect x="0" y="0" width="2" height="2" fill="#1030a0"/><rect x="10" y="10" width="2" height="2" fill="#1030a0"/><rect x="0" y="10" width="2" height="2" fill="#1030a0"/></svg>
<div class="row" style="top:327.7px">(-) Шпангоут в плоскост</div>
<div class="a" style="left:36px;top:345.5px;width:9px;height:1px;background:repeating-linear-gradient(90deg,#9a9a9a 0 1px,transparent 1px 3px)"></div>
<svg class="a" style="left:45px;top:339px;" width="12" height="12" viewBox="0 0 12 12"><path d="M1,1h3v3h7v7h-10z" fill="#a8d0e8" stroke="#1030a0" stroke-width="1.2"/><rect x="0" y="0" width="2" height="2" fill="#1030a0"/><rect x="10" y="10" width="2" height="2" fill="#1030a0"/><rect x="0" y="10" width="2" height="2" fill="#1030a0"/></svg>
<div class="row" style="top:341.9px">(-) Шпангоут в плоскост</div>
<div class="a" style="left:36px;top:359.7px;width:9px;height:1px;background:repeating-linear-gradient(90deg,#9a9a9a 0 1px,transparent 1px 3px)"></div>
<svg class="a" style="left:45px;top:353px;" width="12" height="12" viewBox="0 0 12 12"><path d="M1,1h3v3h7v7h-10z" fill="#a8d0e8" stroke="#1030a0" stroke-width="1.2"/><rect x="0" y="0" width="2" height="2" fill="#1030a0"/><rect x="10" y="10" width="2" height="2" fill="#1030a0"/><rect x="0" y="10" width="2" height="2" fill="#1030a0"/></svg>
<div class="row" style="top:356.1px">(-) Шпангоут в плоскост</div>
<div class="a" style="left:36px;top:373.9px;width:9px;height:1px;background:repeating-linear-gradient(90deg,#9a9a9a 0 1px,transparent 1px 3px)"></div>
<svg class="a" style="left:45px;top:367px;" width="12" height="12" viewBox="0 0 12 12"><path d="M1,1h3v3h7v7h-10z" fill="#a8d0e8" stroke="#1030a0" stroke-width="1.2"/><rect x="0" y="0" width="2" height="2" fill="#1030a0"/><rect x="10" y="10" width="2" height="2" fill="#1030a0"/><rect x="0" y="10" width="2" height="2" fill="#1030a0"/></svg>
<div class="row" style="top:370.3px">(-) Шпангоут на транце</div>
<div class="a" style="left:36px;top:388.1px;width:9px;height:1px;background:repeating-linear-gradient(90deg,#9a9a9a 0 1px,transparent 1px 3px)"></div>
<svg class="a" style="left:44px;top:382px;" width="13" height="12" viewBox="0 0 13 12"><path d="M1,5l6-4 5,4-5,6z" fill="#1890f0" stroke="#0a50c0" stroke-width="0.7"/><path d="M3,4l6,5M5,3l5,4M2,7l5-4M4,9l5-4" stroke="#a0e0ff" stroke-width="0.6"/></svg>
<div class="row" style="top:384.5px">Поверхность транца</div>
<div class="a" style="left:36px;top:402.3px;width:9px;height:1px;background:repeating-linear-gradient(90deg,#9a9a9a 0 1px,transparent 1px 3px)"></div>
<svg class="a" style="left:44px;top:396px;" width="13" height="12" viewBox="0 0 13 12"><path d="M1,5l6-4 5,4-5,6z" fill="#1890f0" stroke="#0a50c0" stroke-width="0.7"/><path d="M3,4l6,5M5,3l5,4M2,7l5-4M4,9l5-4" stroke="#a0e0ff" stroke-width="0.6"/></svg>
<div class="row" style="top:398.7px">Поверхность корпуса, г</div>
<div class="a" style="left:36px;top:416.5px;width:9px;height:1px;background:repeating-linear-gradient(90deg,#9a9a9a 0 1px,transparent 1px 3px)"></div>
<svg class="a" style="left:44px;top:410px;" width="13" height="13" viewBox="0 0 13 13"><path d="M3,1q-3,5 0,11" stroke="#222" stroke-width="1.4" fill="none"/><path d="M5,1.5q3,1 6,0v10q-3,1-6,0z" fill="#1a60e0" stroke="#102080" stroke-width="0.7"/><path d="M5.5,8l1.5-3 1.5,2.5 1.5-3" stroke="#40e0f0" stroke-width="1" fill="none"/></svg>
<div class="row" style="top:412.9px">Сшивка поверхностей:2</div>
<div class="a" style="left:36px;top:430.7px;width:9px;height:1px;background:repeating-linear-gradient(90deg,#9a9a9a 0 1px,transparent 1px 3px)"></div>
<svg class="a" style="left:45px;top:424px;" width="12" height="12" viewBox="0 0 12 12"><path d="M4,10l2-9 4,0-2,9z" fill="#90a8f0" stroke="#3040c0"/><path d="M0,6h12" stroke="#3040c0" stroke-dasharray="1.5 1"/></svg>
<div class="row" style="top:427.1px">Зеркальное отражение</div>
<div class="a" style="left:36px;top:444.9px;width:9px;height:1px;background:repeating-linear-gradient(90deg,#9a9a9a 0 1px,transparent 1px 3px)"></div>
<svg class="a" style="left:44px;top:438px;" width="13" height="13" viewBox="0 0 13 13"><path d="M3,1q-3,5 0,11" stroke="#222" stroke-width="1.4" fill="none"/><path d="M5,1.5q3,1 6,0v10q-3,1-6,0z" fill="#1a60e0" stroke="#102080" stroke-width="0.7"/><path d="M5.5,8l1.5-3 1.5,2.5 1.5-3" stroke="#40e0f0" stroke-width="1" fill="none"/></svg>
<div class="row" style="top:441.3px">Сшивка поверхностей:3</div>
<div class="a" style="left:36px;top:459.1px;width:9px;height:1px;background:repeating-linear-gradient(90deg,#9a9a9a 0 1px,transparent 1px 3px)"></div>
<svg class="a" style="left:45px;top:453px;" width="12" height="12" viewBox="0 0 12 12"><path d="M0,4l7-3 5,2-1,5-5,1 2,3-4-3z" fill="#f01010"/></svg>
<div class="row" style="top:455.5px">Линейчатая поверхност</div>
<div class="a" style="left:147px;top:124px;width:12px;height:342px;background:#fcfcfc"></div>
<div class="a" style="left:148px;top:126px;width:10px;height:12px;background:linear-gradient(90deg,#dde8fa,#b8ccf0);border-radius:2px"></div>
<svg class="a" style="left:150px;top:129px;" width="7" height="5" viewBox="0 0 7 5"><path d="M0.5,4l3-3 3,3" stroke="#3a4a90" stroke-width="1.4" fill="none"/></svg>
<div class="a" style="left:148px;top:328px;width:10px;height:120px;background:linear-gradient(90deg,#d4e0f8,#b4c8f0);border-radius:2px"></div>
<div class="a" style="left:148px;top:453px;width:10px;height:12px;background:linear-gradient(90deg,#dde8fa,#b8ccf0);border-radius:2px"></div>
<svg class="a" style="left:150px;top:456px;" width="7" height="5" viewBox="0 0 7 5"><path d="M0.5,1l3,3 3-3" stroke="#3a4a90" stroke-width="1.4" fill="none"/></svg>
<div class="a" style="left:24px;top:466px;width:135px;height:12px;background:#fafaf8"></div>
<div class="a" style="left:147px;top:465px;width:12px;height:13px;background:#ece9d8"></div>
<div class="a" style="left:25px;top:467px;width:11px;height:10px;background:linear-gradient(#dde8fa,#b8ccf0);border-radius:2px"></div>
<svg class="a" style="left:28px;top:469px;" width="5" height="7" viewBox="0 0 5 7"><path d="M4,0.5l-3,3 3,3" stroke="#3a4a90" stroke-width="1.4" fill="none"/></svg>
<div class="a" style="left:38px;top:467px;width:32px;height:10px;background:linear-gradient(#d4e0f8,#b4c8f0);border-radius:2px"></div>
<div class="a" style="left:135px;top:467px;width:11px;height:10px;background:linear-gradient(#dde8fa,#b8ccf0);border-radius:2px"></div>
<svg class="a" style="left:138px;top:469px;" width="5" height="7" viewBox="0 0 5 7"><path d="M1,0.5l3,3-3,3" stroke="#3a4a90" stroke-width="1.4" fill="none"/></svg>
<div class="a" style="left:22px;top:479px;width:138px;height:149px;background:#ece9d8;border:1px solid #c8c4a8;box-shadow:inset 0 1px 0 #a8a490,inset 1px 1px 0 #fff,inset -1px -1px 0 #fff"></div>
<div class="a" style="left:19px;top:642px;width:147px;height:2px;background:#ccd4ac"></div>
<div class="a" style="left:20px;top:628px;width:143px;height:15px;background:#e8eaed"></div>
<div class="a" style="left:23px;top:628px;width:49px;height:14px;background:#fafafa;border:1px solid #d4d4cc;border-top:none"></div>
<div class="a tx" style="left:25.5px;top:631px;font-size:8.6px;color:#222;transform:scaleX(.92);transform-origin:0 0">Построение</div>
<div class="a tx" style="left:77.5px;top:631px;font-size:8.6px;color:#222;transform:scaleX(.92);transform-origin:0 0">Исполнения</div>
<div class="a tx" style="left:130px;top:631px;font-size:8.6px;color:#222;transform:scaleX(.92);transform-origin:0 0">Зоны</div>
<div class="a" style="left:165px;top:91px;width:1px;height:552px;background:#6e6c60"></div>
<div class="a" style="left:166px;top:91px;width:742px;height:552px;background:#fafbfc"></div>
<div class="a" style="left:907px;top:91px;width:3px;height:553px;background:linear-gradient(90deg,#d8d4bc,#c8c6b4)"></div>
<svg class="a" style="left:0;top:0" width="910" height="728" viewBox="0 0 910 728">
<path d="M243.4,502.3 L248.1,501.3 L252.8,500.3 L257.5,499.3 L262.3,498.2 L267.0,497.1 L271.7,496.1 L276.4,495.0 L281.1,493.8 L285.8,492.7 L290.5,491.6 L295.3,490.4 L300.0,489.3 L304.7,488.1 L309.4,486.9 L314.1,485.7 L318.8,484.4 L323.6,483.2 L328.3,481.9 L333.0,480.7 L337.7,479.4 L342.4,478.1 L347.1,476.8 L351.8,475.4 L356.6,474.1 L361.3,472.7 L366.0,471.3 L370.7,469.9 L375.4,468.5 L380.1,467.1 L384.8,465.6 L389.6,464.2 L394.3,462.7 L399.0,461.2 L403.7,459.7 L408.4,458.2 L413.1,456.6 L417.8,455.0 L422.6,453.4 L427.3,451.8 L432.0,450.2 L436.7,448.6 L441.4,446.9 L446.1,445.2 L450.8,443.5 L455.6,441.8 L460.3,440.1 L465.0,438.3 L469.7,436.5 L474.4,434.7 L479.1,432.9 L483.9,431.1 L488.6,429.2 L493.3,427.3 L498.0,425.4 L502.7,423.4 L507.4,421.5 L512.1,419.5 L516.9,417.5 L521.6,415.5 L526.3,413.4 L531.0,411.3 L535.7,409.2 L540.4,407.1 L545.1,404.9 L549.9,402.7 L554.6,400.5 L559.3,398.3 L564.0,396.0 L568.7,393.7 L573.4,391.4 L578.1,389.1 L582.9,386.7 L587.6,384.3 L592.3,381.8 L597.0,379.3 L601.7,376.8 L606.4,374.3 L611.1,371.7 L615.9,369.1 L620.6,366.5 L625.3,363.8 L630.0,361.1 L634.7,358.4 L639.4,355.6 L644.2,352.8 L648.9,349.9 L653.6,347.1 L658.3,344.1 L663.0,341.2 L667.7,338.2 L672.4,335.1 L677.2,332.1 L681.9,328.9 L686.6,325.8 L691.3,322.6 L696.0,319.4 L700.7,316.1 L705.4,312.7 L710.2,309.4 L714.9,306.0 L719.6,302.5 L724.3,299.0 L729.0,295.4 L733.7,291.8 L738.4,288.2 L743.2,284.5 L747.9,280.8 L752.6,277.0 L757.3,273.1 L762.0,269.2 L766.7,265.3 L771.4,261.3 L776.2,257.2 L780.9,253.1 L785.6,249.0 L790.3,244.8 L795.0,240.5 L799.7,236.2 L804.5,231.8 L809.2,227.3 L813.9,222.9 L818.6,218.3 L823.3,213.7 L828.0,209.0 L832.7,204.2 L837.5,199.4 L842.2,194.6 L846.9,189.6 L851.6,184.6 L851.6,184.6 L846.6,193.5 L841.7,199.5 L836.7,205.6 L831.7,211.6 L826.8,217.6 L821.8,223.5 L816.9,229.4 L811.9,235.1 L806.9,240.6 L802.0,246.0 L797.0,251.2 L792.0,256.2 L787.1,261.1 L782.1,265.8 L777.2,270.4 L772.2,275.0 L767.2,279.4 L762.3,283.8 L757.3,288.1 L752.3,292.3 L747.4,296.5 L742.4,300.6 L737.5,304.7 L732.5,308.8 L727.5,312.9 L722.6,316.9 L717.6,320.9 L712.6,324.8 L707.7,328.8 L702.7,332.6 L697.7,336.4 L692.8,340.2 L687.8,344.0 L682.9,347.6 L677.9,351.2 L672.9,354.8 L668.0,358.2 L663.0,361.7 L658.0,365.0 L653.1,368.4 L648.1,371.7 L643.2,375.0 L638.2,378.3 L633.2,381.5 L628.3,384.8 L623.3,387.9 L618.3,391.1 L613.4,394.2 L608.4,397.2 L603.4,400.2 L598.5,403.1 L593.5,406.0 L588.6,408.8 L583.6,411.6 L578.6,414.3 L573.7,416.9 L568.7,419.5 L563.7,422.1 L558.8,424.6 L553.8,427.1 L548.9,429.5 L543.9,431.9 L538.9,434.3 L534.0,436.6 L529.0,438.9 L524.0,441.1 L519.1,443.4 L514.1,445.5 L509.2,447.7 L504.2,449.8 L499.2,451.9 L494.3,453.9 L489.3,455.9 L484.3,457.9 L479.4,459.8 L474.4,461.7 L469.4,463.6 L464.5,465.6 L459.5,467.5 L454.6,469.4 L449.6,471.3 L444.6,473.3 L439.7,475.2 L434.7,477.2 L429.7,479.1 L424.8,481.1 L419.8,483.1 L414.9,485.1 L409.9,487.1 L404.9,489.1 L400.0,491.1 L395.0,493.1 L390.0,495.0 L385.1,497.0 L380.1,498.9 L375.1,500.8 L370.2,502.8 L365.2,504.7 L360.3,506.5 L355.3,508.4 L350.3,510.3 L345.4,512.1 L340.4,514.0 L335.4,515.8 L330.5,517.7 L325.5,519.5 L320.6,521.3 L315.6,523.1 L310.6,524.9 L305.7,526.6 L300.7,528.3 L295.7,529.9 L290.8,531.6 L285.8,533.1 L280.9,534.6 L275.9,536.1 L270.9,537.5 L266.0,538.8 L261.0,540.1 L263.0,540.4 L260.9,540.2 L259.2,539.6 L257.7,538.5 L256.4,537.0 L255.5,535.0 L252.9,528.9 L250.4,522.6 L248.0,516.1 L245.7,509.4 L243.4,502.5 Z" fill="#8b4e3d" stroke="#3a2418" stroke-width="0.9"/>
<path d="M243.4,501.9 L248.1,496.9 L252.9,492.0 L257.6,487.2 L262.4,482.4 L267.1,477.7 L271.9,473.1 L276.6,468.5 L281.4,463.9 L286.1,459.5 L290.9,455.1 L295.6,450.7 L300.4,446.4 L305.1,442.1 L309.9,437.9 L314.6,433.8 L319.4,429.7 L324.1,425.7 L328.9,421.7 L333.6,417.7 L338.4,413.8 L343.1,409.9 L347.9,406.1 L352.6,402.3 L357.4,398.6 L362.1,394.9 L366.9,391.3 L371.6,387.7 L376.4,384.1 L381.1,380.6 L385.9,377.1 L390.6,373.6 L395.4,370.2 L400.1,366.8 L404.9,363.5 L409.6,360.2 L414.4,356.9 L419.1,353.7 L423.9,350.5 L428.6,347.3 L433.3,344.1 L438.1,341.0 L442.8,337.9 L447.6,334.9 L452.3,331.8 L457.1,328.8 L461.8,325.8 L466.6,322.9 L471.3,320.0 L476.1,317.1 L480.8,314.2 L485.6,311.3 L490.3,308.5 L495.1,305.7 L499.8,302.9 L504.6,300.2 L509.3,297.4 L514.1,294.7 L518.8,292.0 L523.6,289.3 L528.3,286.7 L533.1,284.1 L537.8,281.4 L542.6,278.9 L547.3,276.3 L552.1,273.7 L556.8,271.2 L561.6,268.7 L566.3,266.2 L571.1,263.7 L575.8,261.2 L580.6,258.8 L585.3,256.3 L590.1,253.9 L594.8,251.5 L599.6,249.1 L604.3,246.8 L609.1,244.4 L613.8,242.1 L618.6,239.8 L623.3,237.5 L628.0,235.2 L632.8,232.9 L637.5,230.6 L642.3,228.4 L647.0,226.2 L651.8,223.9 L656.5,221.7 L661.3,219.6 L666.0,217.4 L670.8,215.2 L675.5,213.1 L680.3,211.0 L685.0,208.9 L689.8,206.8 L694.5,204.7 L699.3,202.6 L704.0,200.6 L708.8,198.5 L713.5,196.5 L718.3,194.5 L723.0,192.5 L727.8,190.6 L732.5,188.6 L737.3,186.7 L742.0,184.7 L746.8,182.8 L751.5,180.9 L756.3,179.1 L761.0,177.2 L765.8,175.4 L770.5,173.6 L775.3,171.8 L780.0,170.0 L784.8,168.2 L789.5,166.5 L794.3,164.8 L799.0,163.1 L803.8,161.4 L808.5,159.7 L813.5,162.6 L818.4,165.2 L823.3,167.8 L828.1,170.5 L832.9,173.2 L837.7,175.9 L842.4,178.7 L847.0,181.5 L851.6,184.3 L851.6,184.6 L846.9,189.6 L842.2,194.6 L837.5,199.4 L832.7,204.2 L828.0,209.0 L823.3,213.7 L818.6,218.3 L813.9,222.9 L809.2,227.3 L804.5,231.8 L799.7,236.2 L795.0,240.5 L790.3,244.8 L785.6,249.0 L780.9,253.1 L776.2,257.2 L771.4,261.3 L766.7,265.3 L762.0,269.2 L757.3,273.1 L752.6,277.0 L747.9,280.8 L743.2,284.5 L738.4,288.2 L733.7,291.8 L729.0,295.4 L724.3,299.0 L719.6,302.5 L714.9,306.0 L710.2,309.4 L705.4,312.7 L700.7,316.1 L696.0,319.4 L691.3,322.6 L686.6,325.8 L681.9,328.9 L677.2,332.1 L672.4,335.1 L667.7,338.2 L663.0,341.2 L658.3,344.1 L653.6,347.1 L648.9,349.9 L644.2,352.8 L639.4,355.6 L634.7,358.4 L630.0,361.1 L625.3,363.8 L620.6,366.5 L615.9,369.1 L611.1,371.7 L606.4,374.3 L601.7,376.8 L597.0,379.3 L592.3,381.8 L587.6,384.3 L582.9,386.7 L578.1,389.1 L573.4,391.4 L568.7,393.7 L564.0,396.0 L559.3,398.3 L554.6,400.5 L549.9,402.7 L545.1,404.9 L540.4,407.1 L535.7,409.2 L531.0,411.3 L526.3,413.4 L521.6,415.5 L516.9,417.5 L512.1,419.5 L507.4,421.5 L502.7,423.4 L498.0,425.4 L493.3,427.3 L488.6,429.2 L483.9,431.1 L479.1,432.9 L474.4,434.7 L469.7,436.5 L465.0,438.3 L460.3,440.1 L455.6,441.8 L450.8,443.5 L446.1,445.2 L441.4,446.9 L436.7,448.6 L432.0,450.2 L427.3,451.8 L422.6,453.4 L417.8,455.0 L413.1,456.6 L408.4,458.2 L403.7,459.7 L399.0,461.2 L394.3,462.7 L389.6,464.2 L384.8,465.6 L380.1,467.1 L375.4,468.5 L370.7,469.9 L366.0,471.3 L361.3,472.7 L356.6,474.1 L351.8,475.4 L347.1,476.8 L342.4,478.1 L337.7,479.4 L333.0,480.7 L328.3,481.9 L323.6,483.2 L318.8,484.4 L314.1,485.7 L309.4,486.9 L304.7,488.1 L300.0,489.3 L295.3,490.4 L290.5,491.6 L285.8,492.7 L281.1,493.8 L276.4,495.0 L271.7,496.1 L267.0,497.1 L262.3,498.2 L257.5,499.3 L252.8,500.3 L248.1,501.3 L243.4,502.3 Z" fill="#b89a02"/>
<path d="M247.0,498.1 L251.5,500.6 M253.4,491.5 L264.7,497.7 M261.4,483.4 L280.7,493.9 M268.6,476.3 L294.8,490.5 M273.0,472.0 L303.2,488.5 M278.4,466.8 L313.4,485.9 M283.8,461.7 L323.4,483.2 M289.0,456.8 L332.8,480.7 M294.5,451.7 L342.7,478.0 M300.7,446.1 L353.5,474.9 M306.0,441.4 L362.7,472.3 M311.4,436.6 L371.8,469.6 M316.8,431.9 L380.9,466.9 M323.0,426.6 L391.0,463.7 M330.0,420.7 L402.3,460.1 M338.0,414.1 L414.9,456.0 M347.0,406.8 L428.7,451.4 M357.0,398.9 L443.6,446.1 M366.0,391.9 L456.7,441.4 M374.0,385.9 L468.0,437.2 M383.5,378.8 L481.2,432.1 M392.7,372.1 L493.6,427.2 M404.0,364.1 L508.4,421.1 M417.0,355.1 L524.9,414.0 M432.0,345.0 L543.3,405.8 M447.0,335.2 L561.0,397.5 M462.0,325.7 L578.1,389.1 M475.8,317.2 L593.2,381.3 M488.5,309.6 L606.8,374.1 M499.0,303.4 L617.6,368.1 M510.0,297.0 L628.8,361.8 M523.0,289.7 L641.5,354.3 M537.0,281.9 L654.9,346.2 M552.0,273.8 L668.8,337.5 M567.7,265.4 L682.9,328.3 M583.6,257.2 L696.7,318.9 M595.7,251.1 L706.9,311.7 M604.0,246.9 L713.7,306.8 M612.3,242.8 L720.5,301.8 M623.7,237.3 L729.6,295.0 M636.7,231.0 L739.7,287.2 M647.0,226.2 L747.5,281.0 M655.6,222.2 L754.0,275.8 M665.0,217.9 L760.9,270.2 M672.5,214.5 L766.3,265.6 M679.3,211.4 L771.2,261.5 M686.3,208.3 L776.1,257.3 M693.6,205.1 L781.2,252.9 M703.0,201.0 L787.6,247.2 M712.0,197.2 L793.7,241.7 M721.8,193.0 L800.2,235.8 M730.8,189.3 L806.0,230.3 M740.5,185.3 L812.2,224.5 M752.8,180.4 L819.9,217.0 M766.0,175.3 L827.9,209.1 M780.8,169.7 L836.7,200.2 M793.0,165.2 L843.8,192.9 M802.3,161.9 L849.0,187.4 M243.4,502.2 L247.7,498.5 L255.0,492.4 L264.2,484.9 L272.4,478.3 L277.4,474.4 L283.5,469.6 L289.5,464.8 L295.4,460.3 L301.5,455.5 L308.4,450.3 L314.2,445.9 L320.2,441.4 L326.1,437.0 L332.9,432.0 L340.5,426.4 L349.1,420.2 L358.8,413.3 L369.6,405.8 L379.1,399.1 L387.6,393.3 L397.7,386.6 L407.3,380.1 L419.1,372.4 L432.7,363.6 L448.1,353.8 L463.5,344.3 L478.8,334.9 L492.8,326.5 L505.6,318.9 L516.2,312.8 L527.2,306.4 L540.2,299.0 L554.1,291.2 L568.9,283.0 L584.4,274.6 L600.0,266.2 L611.8,259.9 L619.9,255.6 L628.0,251.4 L639.1,245.6 L651.6,239.2 L661.6,234.1 L669.9,230.0 L678.9,225.4 L686.1,221.9 L692.6,218.7 L699.3,215.4 L706.3,212.0 L715.3,207.7 L723.8,203.6 L733.2,199.2 L741.7,195.3 L750.9,191.0 L762.5,185.7 L775.0,180.2 L788.9,174.1 L800.4,169.2 L809.1,165.6 L814.7,163.5 M243.4,502.2 L248.6,499.0 L257.4,493.7 L268.2,487.1 L277.8,481.3 L283.6,477.7 L290.6,473.5 L297.6,469.2 L304.3,465.2 L311.4,460.9 L319.2,456.2 L325.8,452.2 L332.6,448.2 L339.2,444.2 L346.8,439.6 L355.3,434.5 L364.9,428.8 L375.6,422.4 L387.3,415.4 L397.7,409.3 L406.9,403.8 L417.7,397.5 L428.0,391.4 L440.5,384.0 L454.8,375.7 L471.0,366.3 L486.9,357.0 L502.6,347.9 L516.9,339.7 L529.9,332.2 L540.5,326.1 L551.6,319.7 L564.5,312.3 L578.3,304.4 L592.9,296.1 L608.0,287.4 L623.2,278.8 L634.6,272.3 L642.4,267.9 L650.2,263.5 L660.8,257.5 L672.7,250.7 L682.2,245.4 L690.0,241.0 L698.6,236.2 L705.3,232.4 L711.5,228.9 L717.7,225.4 L724.3,221.8 L732.6,217.2 L740.6,212.8 L749.2,208.0 L757.1,203.7 L765.6,199.0 L776.3,193.2 L787.7,187.1 L800.4,180.4 L810.8,174.9 L818.7,170.8 L823.6,168.5 M243.4,502.2 L250.0,499.7 L260.7,495.5 L274.0,490.3 L285.6,485.6 L292.6,482.7 L301.1,479.2 L309.5,475.7 L317.5,472.3 L325.8,468.8 L335.0,464.9 L342.8,461.5 L350.7,458.0 L358.4,454.6 L367.2,450.7 L377.0,446.3 L388.0,441.4 L400.1,435.8 L413.3,429.6 L424.9,424.1 L435.1,419.2 L447.0,413.5 L458.3,407.9 L471.9,401.1 L487.2,393.4 L504.4,384.5 L521.1,375.7 L537.5,366.9 L552.1,358.9 L565.4,351.5 L576.1,345.5 L587.2,339.2 L600.1,331.7 L613.6,323.7 L627.9,315.2 L642.6,306.3 L657.1,297.3 L668.0,290.5 L675.3,285.8 L682.6,281.2 L692.5,274.8 L703.6,267.6 L712.4,261.8 L719.5,257.1 L727.3,251.9 L733.5,247.7 L739.0,244.0 L744.7,240.1 L750.5,236.1 L758.0,231.0 L765.1,226.1 L772.7,220.8 L779.7,216.0 L787.1,210.8 L796.4,204.2 L806.3,197.3 L817.1,189.5 L826.0,183.2 L832.7,178.5 L836.5,175.8 M243.4,502.2 L250.8,500.2 L262.8,496.6 L277.4,492.1 L290.3,488.1 L298.1,485.7 L307.4,482.6 L316.6,479.6 L325.4,476.6 L334.5,473.5 L344.6,470.0 L353.0,467.0 L361.6,464.0 L370.0,460.9 L379.5,457.4 L390.0,453.4 L401.8,448.9 L414.8,443.8 L428.9,438.1 L441.3,433.0 L452.0,428.5 L464.6,423.1 L476.4,417.8 L490.7,411.4 L506.6,404.0 L524.4,395.4 L541.7,386.9 L558.4,378.3 L573.3,370.4 L586.7,363.1 L597.5,357.1 L608.6,350.8 L621.4,343.3 L634.9,335.3 L648.9,326.7 L663.3,317.6 L677.4,308.4 L688.0,301.4 L695.1,296.6 L702.1,291.8 L711.6,285.2 L722.2,277.7 L730.4,271.7 L737.3,266.7 L744.6,261.3 L750.4,256.9 L755.6,253.0 L760.8,249.0 L766.3,244.7 L773.2,239.3 L779.8,234.1 L786.8,228.5 L793.2,223.4 L800.0,217.8 L808.5,210.8 L817.4,203.3 L827.2,195.0 L835.1,188.2 L841.1,183.0 L844.3,180.2 M243.4,502.2 L247.3,498.3 L254.2,491.9 L262.8,484.1 L270.4,477.3 L275.1,473.1 L280.8,468.1 L286.6,463.2 L292.1,458.5 L297.9,453.6 L304.4,448.1 L310.0,443.5 L315.6,438.9 L321.3,434.4 M243.4,502.2 L248.1,498.7 L256.2,493.0 L266.2,486.0 L275.1,479.8 L280.5,476.1 L287.1,471.6 L293.7,467.1 L300.0,462.8 L306.5,458.3 L313.9,453.3 L320.2,449.1 L326.5,444.9 L332.8,440.7 M243.4,502.2 L249.3,499.3 L259.0,494.6 L271.1,488.7 L281.7,483.4 L288.1,480.2 L295.9,476.3 L303.6,472.5 L310.9,468.8 L318.6,464.9 L327.1,460.5 L334.3,456.8 L341.6,453.1 L348.8,449.4 M243.4,502.2 L250.4,499.9 L261.8,496.1 L275.7,491.2 L288.0,486.8 L295.3,484.2 L304.3,480.9 L313.1,477.6 L321.4,474.5 L330.1,471.2 L339.8,467.4 L347.9,464.3 L356.1,461.0 L364.2,457.8 M243.4,502.2 L251.2,500.4 L263.8,497.2 L279.2,493.1 L292.7,489.4 L300.8,487.1 L310.6,484.3 L320.2,481.5 L329.3,478.8 L338.8,475.9 L349.3,472.6 L358.1,469.8 L367.0,467.0 L375.7,464.1" fill="none" stroke="#6c7cc0" stroke-width="1"/>
<path d="M249.4,498.5a1.7,1.7 0 1,0 -3.4,0a1.7,1.7 0 1,0 3.4,0 M256.7,492.4a1.7,1.7 0 1,0 -3.4,0a1.7,1.7 0 1,0 3.4,0 M265.9,484.9a1.7,1.7 0 1,0 -3.4,0a1.7,1.7 0 1,0 3.4,0 M274.1,478.3a1.7,1.7 0 1,0 -3.4,0a1.7,1.7 0 1,0 3.4,0 M279.1,474.4a1.7,1.7 0 1,0 -3.4,0a1.7,1.7 0 1,0 3.4,0 M285.2,469.6a1.7,1.7 0 1,0 -3.4,0a1.7,1.7 0 1,0 3.4,0 M291.2,464.8a1.7,1.7 0 1,0 -3.4,0a1.7,1.7 0 1,0 3.4,0 M297.1,460.3a1.7,1.7 0 1,0 -3.4,0a1.7,1.7 0 1,0 3.4,0 M303.2,455.5a1.7,1.7 0 1,0 -3.4,0a1.7,1.7 0 1,0 3.4,0 M310.1,450.3a1.7,1.7 0 1,0 -3.4,0a1.7,1.7 0 1,0 3.4,0 M315.9,445.9a1.7,1.7 0 1,0 -3.4,0a1.7,1.7 0 1,0 3.4,0 M321.9,441.4a1.7,1.7 0 1,0 -3.4,0a1.7,1.7 0 1,0 3.4,0 M327.8,437.0a1.7,1.7 0 1,0 -3.4,0a1.7,1.7 0 1,0 3.4,0 M334.6,432.0a1.7,1.7 0 1,0 -3.4,0a1.7,1.7 0 1,0 3.4,0 M342.2,426.4a1.7,1.7 0 1,0 -3.4,0a1.7,1.7 0 1,0 3.4,0 M350.8,420.2a1.7,1.7 0 1,0 -3.4,0a1.7,1.7 0 1,0 3.4,0 M360.5,413.3a1.7,1.7 0 1,0 -3.4,0a1.7,1.7 0 1,0 3.4,0 M371.3,405.8a1.7,1.7 0 1,0 -3.4,0a1.7,1.7 0 1,0 3.4,0 M380.8,399.1a1.7,1.7 0 1,0 -3.4,0a1.7,1.7 0 1,0 3.4,0 M389.3,393.3a1.7,1.7 0 1,0 -3.4,0a1.7,1.7 0 1,0 3.4,0 M399.4,386.6a1.7,1.7 0 1,0 -3.4,0a1.7,1.7 0 1,0 3.4,0 M409.0,380.1a1.7,1.7 0 1,0 -3.4,0a1.7,1.7 0 1,0 3.4,0 M420.8,372.4a1.7,1.7 0 1,0 -3.4,0a1.7,1.7 0 1,0 3.4,0 M434.4,363.6a1.7,1.7 0 1,0 -3.4,0a1.7,1.7 0 1,0 3.4,0 M449.8,353.8a1.7,1.7 0 1,0 -3.4,0a1.7,1.7 0 1,0 3.4,0 M465.2,344.3a1.7,1.7 0 1,0 -3.4,0a1.7,1.7 0 1,0 3.4,0 M480.5,334.9a1.7,1.7 0 1,0 -3.4,0a1.7,1.7 0 1,0 3.4,0 M494.5,326.5a1.7,1.7 0 1,0 -3.4,0a1.7,1.7 0 1,0 3.4,0 M507.3,318.9a1.7,1.7 0 1,0 -3.4,0a1.7,1.7 0 1,0 3.4,0 M517.9,312.8a1.7,1.7 0 1,0 -3.4,0a1.7,1.7 0 1,0 3.4,0 M528.9,306.4a1.7,1.7 0 1,0 -3.4,0a1.7,1.7 0 1,0 3.4,0 M541.9,299.0a1.7,1.7 0 1,0 -3.4,0a1.7,1.7 0 1,0 3.4,0 M555.8,291.2a1.7,1.7 0 1,0 -3.4,0a1.7,1.7 0 1,0 3.4,0 M570.6,283.0a1.7,1.7 0 1,0 -3.4,0a1.7,1.7 0 1,0 3.4,0 M586.1,274.6a1.7,1.7 0 1,0 -3.4,0a1.7,1.7 0 1,0 3.4,0 M601.7,266.2a1.7,1.7 0 1,0 -3.4,0a1.7,1.7 0 1,0 3.4,0 M613.5,259.9a1.7,1.7 0 1,0 -3.4,0a1.7,1.7 0 1,0 3.4,0 M621.6,255.6a1.7,1.7 0 1,0 -3.4,0a1.7,1.7 0 1,0 3.4,0 M629.7,251.4a1.7,1.7 0 1,0 -3.4,0a1.7,1.7 0 1,0 3.4,0 M640.8,245.6a1.7,1.7 0 1,0 -3.4,0a1.7,1.7 0 1,0 3.4,0 M653.3,239.2a1.7,1.7 0 1,0 -3.4,0a1.7,1.7 0 1,0 3.4,0 M663.3,234.1a1.7,1.7 0 1,0 -3.4,0a1.7,1.7 0 1,0 3.4,0 M671.6,230.0a1.7,1.7 0 1,0 -3.4,0a1.7,1.7 0 1,0 3.4,0 M680.6,225.4a1.7,1.7 0 1,0 -3.4,0a1.7,1.7 0 1,0 3.4,0 M687.8,221.9a1.7,1.7 0 1,0 -3.4,0a1.7,1.7 0 1,0 3.4,0 M694.3,218.7a1.7,1.7 0 1,0 -3.4,0a1.7,1.7 0 1,0 3.4,0 M701.0,215.4a1.7,1.7 0 1,0 -3.4,0a1.7,1.7 0 1,0 3.4,0 M708.0,212.0a1.7,1.7 0 1,0 -3.4,0a1.7,1.7 0 1,0 3.4,0 M717.0,207.7a1.7,1.7 0 1,0 -3.4,0a1.7,1.7 0 1,0 3.4,0 M725.5,203.6a1.7,1.7 0 1,0 -3.4,0a1.7,1.7 0 1,0 3.4,0 M734.9,199.2a1.7,1.7 0 1,0 -3.4,0a1.7,1.7 0 1,0 3.4,0 M743.4,195.3a1.7,1.7 0 1,0 -3.4,0a1.7,1.7 0 1,0 3.4,0 M752.6,191.0a1.7,1.7 0 1,0 -3.4,0a1.7,1.7 0 1,0 3.4,0 M764.2,185.7a1.7,1.7 0 1,0 -3.4,0a1.7,1.7 0 1,0 3.4,0 M776.7,180.2a1.7,1.7 0 1,0 -3.4,0a1.7,1.7 0 1,0 3.4,0 M790.6,174.1a1.7,1.7 0 1,0 -3.4,0a1.7,1.7 0 1,0 3.4,0 M802.1,169.2a1.7,1.7 0 1,0 -3.4,0a1.7,1.7 0 1,0 3.4,0 M810.8,165.6a1.7,1.7 0 1,0 -3.4,0a1.7,1.7 0 1,0 3.4,0 M816.4,163.5a1.7,1.7 0 1,0 -3.4,0a1.7,1.7 0 1,0 3.4,0 M250.3,499.0a1.7,1.7 0 1,0 -3.4,0a1.7,1.7 0 1,0 3.4,0 M259.1,493.7a1.7,1.7 0 1,0 -3.4,0a1.7,1.7 0 1,0 3.4,0 M269.9,487.1a1.7,1.7 0 1,0 -3.4,0a1.7,1.7 0 1,0 3.4,0 M279.5,481.3a1.7,1.7 0 1,0 -3.4,0a1.7,1.7 0 1,0 3.4,0 M285.3,477.7a1.7,1.7 0 1,0 -3.4,0a1.7,1.7 0 1,0 3.4,0 M292.3,473.5a1.7,1.7 0 1,0 -3.4,0a1.7,1.7 0 1,0 3.4,0 M299.3,469.2a1.7,1.7 0 1,0 -3.4,0a1.7,1.7 0 1,0 3.4,0 M306.0,465.2a1.7,1.7 0 1,0 -3.4,0a1.7,1.7 0 1,0 3.4,0 M313.1,460.9a1.7,1.7 0 1,0 -3.4,0a1.7,1.7 0 1,0 3.4,0 M320.9,456.2a1.7,1.7 0 1,0 -3.4,0a1.7,1.7 0 1,0 3.4,0 M327.5,452.2a1.7,1.7 0 1,0 -3.4,0a1.7,1.7 0 1,0 3.4,0 M334.3,448.2a1.7,1.7 0 1,0 -3.4,0a1.7,1.7 0 1,0 3.4,0 M340.9,444.2a1.7,1.7 0 1,0 -3.4,0a1.7,1.7 0 1,0 3.4,0 M348.5,439.6a1.7,1.7 0 1,0 -3.4,0a1.7,1.7 0 1,0 3.4,0 M357.0,434.5a1.7,1.7 0 1,0 -3.4,0a1.7,1.7 0 1,0 3.4,0 M366.6,428.8a1.7,1.7 0 1,0 -3.4,0a1.7,1.7 0 1,0 3.4,0 M377.3,422.4a1.7,1.7 0 1,0 -3.4,0a1.7,1.7 0 1,0 3.4,0 M389.0,415.4a1.7,1.7 0 1,0 -3.4,0a1.7,1.7 0 1,0 3.4,0 M399.4,409.3a1.7,1.7 0 1,0 -3.4,0a1.7,1.7 0 1,0 3.4,0 M408.6,403.8a1.7,1.7 0 1,0 -3.4,0a1.7,1.7 0 1,0 3.4,0 M419.4,397.5a1.7,1.7 0 1,0 -3.4,0a1.7,1.7 0 1,0 3.4,0 M429.7,391.4a1.7,1.7 0 1,0 -3.4,0a1.7,1.7 0 1,0 3.4,0 M442.2,384.0a1.7,1.7 0 1,0 -3.4,0a1.7,1.7 0 1,0 3.4,0 M456.5,375.7a1.7,1.7 0 1,0 -3.4,0a1.7,1.7 0 1,0 3.4,0 M472.7,366.3a1.7,1.7 0 1,0 -3.4,0a1.7,1.7 0 1,0 3.4,0 M488.6,357.0a1.7,1.7 0 1,0 -3.4,0a1.7,1.7 0 1,0 3.4,0 M504.3,347.9a1.7,1.7 0 1,0 -3.4,0a1.7,1.7 0 1,0 3.4,0 M518.6,339.7a1.7,1.7 0 1,0 -3.4,0a1.7,1.7 0 1,0 3.4,0 M531.6,332.2a1.7,1.7 0 1,0 -3.4,0a1.7,1.7 0 1,0 3.4,0 M542.2,326.1a1.7,1.7 0 1,0 -3.4,0a1.7,1.7 0 1,0 3.4,0 M553.3,319.7a1.7,1.7 0 1,0 -3.4,0a1.7,1.7 0 1,0 3.4,0 M566.2,312.3a1.7,1.7 0 1,0 -3.4,0a1.7,1.7 0 1,0 3.4,0 M580.0,304.4a1.7,1.7 0 1,0 -3.4,0a1.7,1.7 0 1,0 3.4,0 M594.6,296.1a1.7,1.7 0 1,0 -3.4,0a1.7,1.7 0 1,0 3.4,0 M609.7,287.4a1.7,1.7 0 1,0 -3.4,0a1.7,1.7 0 1,0 3.4,0 M624.9,278.8a1.7,1.7 0 1,0 -3.4,0a1.7,1.7 0 1,0 3.4,0 M636.3,272.3a1.7,1.7 0 1,0 -3.4,0a1.7,1.7 0 1,0 3.4,0 M644.1,267.9a1.7,1.7 0 1,0 -3.4,0a1.7,1.7 0 1,0 3.4,0 M651.9,263.5a1.7,1.7 0 1,0 -3.4,0a1.7,1.7 0 1,0 3.4,0 M662.5,257.5a1.7,1.7 0 1,0 -3.4,0a1.7,1.7 0 1,0 3.4,0 M674.4,250.7a1.7,1.7 0 1,0 -3.4,0a1.7,1.7 0 1,0 3.4,0 M683.9,245.4a1.7,1.7 0 1,0 -3.4,0a1.7,1.7 0 1,0 3.4,0 M691.7,241.0a1.7,1.7 0 1,0 -3.4,0a1.7,1.7 0 1,0 3.4,0 M700.3,236.2a1.7,1.7 0 1,0 -3.4,0a1.7,1.7 0 1,0 3.4,0 M707.0,232.4a1.7,1.7 0 1,0 -3.4,0a1.7,1.7 0 1,0 3.4,0 M713.2,228.9a1.7,1.7 0 1,0 -3.4,0a1.7,1.7 0 1,0 3.4,0 M719.4,225.4a1.7,1.7 0 1,0 -3.4,0a1.7,1.7 0 1,0 3.4,0 M726.0,221.8a1.7,1.7 0 1,0 -3.4,0a1.7,1.7 0 1,0 3.4,0 M734.3,217.2a1.7,1.7 0 1,0 -3.4,0a1.7,1.7 0 1,0 3.4,0 M742.3,212.8a1.7,1.7 0 1,0 -3.4,0a1.7,1.7 0 1,0 3.4,0 M750.9,208.0a1.7,1.7 0 1,0 -3.4,0a1.7,1.7 0 1,0 3.4,0 M758.8,203.7a1.7,1.7 0 1,0 -3.4,0a1.7,1.7 0 1,0 3.4,0 M767.3,199.0a1.7,1.7 0 1,0 -3.4,0a1.7,1.7 0 1,0 3.4,0 M778.0,193.2a1.7,1.7 0 1,0 -3.4,0a1.7,1.7 0 1,0 3.4,0 M789.4,187.1a1.7,1.7 0 1,0 -3.4,0a1.7,1.7 0 1,0 3.4,0 M802.1,180.4a1.7,1.7 0 1,0 -3.4,0a1.7,1.7 0 1,0 3.4,0 M812.5,174.9a1.7,1.7 0 1,0 -3.4,0a1.7,1.7 0 1,0 3.4,0 M820.4,170.8a1.7,1.7 0 1,0 -3.4,0a1.7,1.7 0 1,0 3.4,0 M825.3,168.5a1.7,1.7 0 1,0 -3.4,0a1.7,1.7 0 1,0 3.4,0 M251.7,499.7a1.7,1.7 0 1,0 -3.4,0a1.7,1.7 0 1,0 3.4,0 M262.4,495.5a1.7,1.7 0 1,0 -3.4,0a1.7,1.7 0 1,0 3.4,0 M275.7,490.3a1.7,1.7 0 1,0 -3.4,0a1.7,1.7 0 1,0 3.4,0 M287.3,485.6a1.7,1.7 0 1,0 -3.4,0a1.7,1.7 0 1,0 3.4,0 M294.3,482.7a1.7,1.7 0 1,0 -3.4,0a1.7,1.7 0 1,0 3.4,0 M302.8,479.2a1.7,1.7 0 1,0 -3.4,0a1.7,1.7 0 1,0 3.4,0 M311.2,475.7a1.7,1.7 0 1,0 -3.4,0a1.7,1.7 0 1,0 3.4,0 M319.2,472.3a1.7,1.7 0 1,0 -3.4,0a1.7,1.7 0 1,0 3.4,0 M327.5,468.8a1.7,1.7 0 1,0 -3.4,0a1.7,1.7 0 1,0 3.4,0 M336.7,464.9a1.7,1.7 0 1,0 -3.4,0a1.7,1.7 0 1,0 3.4,0 M344.5,461.5a1.7,1.7 0 1,0 -3.4,0a1.7,1.7 0 1,0 3.4,0 M352.4,458.0a1.7,1.7 0 1,0 -3.4,0a1.7,1.7 0 1,0 3.4,0 M360.1,454.6a1.7,1.7 0 1,0 -3.4,0a1.7,1.7 0 1,0 3.4,0 M368.9,450.7a1.7,1.7 0 1,0 -3.4,0a1.7,1.7 0 1,0 3.4,0 M378.7,446.3a1.7,1.7 0 1,0 -3.4,0a1.7,1.7 0 1,0 3.4,0 M389.7,441.4a1.7,1.7 0 1,0 -3.4,0a1.7,1.7 0 1,0 3.4,0 M401.8,435.8a1.7,1.7 0 1,0 -3.4,0a1.7,1.7 0 1,0 3.4,0 M415.0,429.6a1.7,1.7 0 1,0 -3.4,0a1.7,1.7 0 1,0 3.4,0 M426.6,424.1a1.7,1.7 0 1,0 -3.4,0a1.7,1.7 0 1,0 3.4,0 M436.8,419.2a1.7,1.7 0 1,0 -3.4,0a1.7,1.7 0 1,0 3.4,0 M448.7,413.5a1.7,1.7 0 1,0 -3.4,0a1.7,1.7 0 1,0 3.4,0 M460.0,407.9a1.7,1.7 0 1,0 -3.4,0a1.7,1.7 0 1,0 3.4,0 M473.6,401.1a1.7,1.7 0 1,0 -3.4,0a1.7,1.7 0 1,0 3.4,0 M488.9,393.4a1.7,1.7 0 1,0 -3.4,0a1.7,1.7 0 1,0 3.4,0 M506.1,384.5a1.7,1.7 0 1,0 -3.4,0a1.7,1.7 0 1,0 3.4,0 M522.8,375.7a1.7,1.7 0 1,0 -3.4,0a1.7,1.7 0 1,0 3.4,0 M539.2,366.9a1.7,1.7 0 1,0 -3.4,0a1.7,1.7 0 1,0 3.4,0 M553.8,358.9a1.7,1.7 0 1,0 -3.4,0a1.7,1.7 0 1,0 3.4,0 M567.1,351.5a1.7,1.7 0 1,0 -3.4,0a1.7,1.7 0 1,0 3.4,0 M577.8,345.5a1.7,1.7 0 1,0 -3.4,0a1.7,1.7 0 1,0 3.4,0 M588.9,339.2a1.7,1.7 0 1,0 -3.4,0a1.7,1.7 0 1,0 3.4,0 M601.8,331.7a1.7,1.7 0 1,0 -3.4,0a1.7,1.7 0 1,0 3.4,0 M615.3,323.7a1.7,1.7 0 1,0 -3.4,0a1.7,1.7 0 1,0 3.4,0 M629.6,315.2a1.7,1.7 0 1,0 -3.4,0a1.7,1.7 0 1,0 3.4,0 M644.3,306.3a1.7,1.7 0 1,0 -3.4,0a1.7,1.7 0 1,0 3.4,0 M658.8,297.3a1.7,1.7 0 1,0 -3.4,0a1.7,1.7 0 1,0 3.4,0 M669.7,290.5a1.7,1.7 0 1,0 -3.4,0a1.7,1.7 0 1,0 3.4,0 M677.0,285.8a1.7,1.7 0 1,0 -3.4,0a1.7,1.7 0 1,0 3.4,0 M684.3,281.2a1.7,1.7 0 1,0 -3.4,0a1.7,1.7 0 1,0 3.4,0 M694.2,274.8a1.7,1.7 0 1,0 -3.4,0a1.7,1.7 0 1,0 3.4,0 M705.3,267.6a1.7,1.7 0 1,0 -3.4,0a1.7,1.7 0 1,0 3.4,0 M714.1,261.8a1.7,1.7 0 1,0 -3.4,0a1.7,1.7 0 1,0 3.4,0 M721.2,257.1a1.7,1.7 0 1,0 -3.4,0a1.7,1.7 0 1,0 3.4,0 M729.0,251.9a1.7,1.7 0 1,0 -3.4,0a1.7,1.7 0 1,0 3.4,0 M735.2,247.7a1.7,1.7 0 1,0 -3.4,0a1.7,1.7 0 1,0 3.4,0 M740.7,244.0a1.7,1.7 0 1,0 -3.4,0a1.7,1.7 0 1,0 3.4,0 M746.4,240.1a1.7,1.7 0 1,0 -3.4,0a1.7,1.7 0 1,0 3.4,0 M752.2,236.1a1.7,1.7 0 1,0 -3.4,0a1.7,1.7 0 1,0 3.4,0 M759.7,231.0a1.7,1.7 0 1,0 -3.4,0a1.7,1.7 0 1,0 3.4,0 M766.8,226.1a1.7,1.7 0 1,0 -3.4,0a1.7,1.7 0 1,0 3.4,0 M774.4,220.8a1.7,1.7 0 1,0 -3.4,0a1.7,1.7 0 1,0 3.4,0 M781.4,216.0a1.7,1.7 0 1,0 -3.4,0a1.7,1.7 0 1,0 3.4,0 M788.8,210.8a1.7,1.7 0 1,0 -3.4,0a1.7,1.7 0 1,0 3.4,0 M798.1,204.2a1.7,1.7 0 1,0 -3.4,0a1.7,1.7 0 1,0 3.4,0 M808.0,197.3a1.7,1.7 0 1,0 -3.4,0a1.7,1.7 0 1,0 3.4,0 M818.8,189.5a1.7,1.7 0 1,0 -3.4,0a1.7,1.7 0 1,0 3.4,0 M827.7,183.2a1.7,1.7 0 1,0 -3.4,0a1.7,1.7 0 1,0 3.4,0 M834.4,178.5a1.7,1.7 0 1,0 -3.4,0a1.7,1.7 0 1,0 3.4,0 M838.2,175.8a1.7,1.7 0 1,0 -3.4,0a1.7,1.7 0 1,0 3.4,0 M252.5,500.2a1.7,1.7 0 1,0 -3.4,0a1.7,1.7 0 1,0 3.4,0 M264.5,496.6a1.7,1.7 0 1,0 -3.4,0a1.7,1.7 0 1,0 3.4,0 M279.1,492.1a1.7,1.7 0 1,0 -3.4,0a1.7,1.7 0 1,0 3.4,0 M292.0,488.1a1.7,1.7 0 1,0 -3.4,0a1.7,1.7 0 1,0 3.4,0 M299.8,485.7a1.7,1.7 0 1,0 -3.4,0a1.7,1.7 0 1,0 3.4,0 M309.1,482.6a1.7,1.7 0 1,0 -3.4,0a1.7,1.7 0 1,0 3.4,0 M318.3,479.6a1.7,1.7 0 1,0 -3.4,0a1.7,1.7 0 1,0 3.4,0 M327.1,476.6a1.7,1.7 0 1,0 -3.4,0a1.7,1.7 0 1,0 3.4,0 M336.2,473.5a1.7,1.7 0 1,0 -3.4,0a1.7,1.7 0 1,0 3.4,0 M346.3,470.0a1.7,1.7 0 1,0 -3.4,0a1.7,1.7 0 1,0 3.4,0 M354.7,467.0a1.7,1.7 0 1,0 -3.4,0a1.7,1.7 0 1,0 3.4,0 M363.3,464.0a1.7,1.7 0 1,0 -3.4,0a1.7,1.7 0 1,0 3.4,0 M371.7,460.9a1.7,1.7 0 1,0 -3.4,0a1.7,1.7 0 1,0 3.4,0 M381.2,457.4a1.7,1.7 0 1,0 -3.4,0a1.7,1.7 0 1,0 3.4,0 M391.7,453.4a1.7,1.7 0 1,0 -3.4,0a1.7,1.7 0 1,0 3.4,0 M403.5,448.9a1.7,1.7 0 1,0 -3.4,0a1.7,1.7 0 1,0 3.4,0 M416.5,443.8a1.7,1.7 0 1,0 -3.4,0a1.7,1.7 0 1,0 3.4,0 M430.6,438.1a1.7,1.7 0 1,0 -3.4,0a1.7,1.7 0 1,0 3.4,0 M443.0,433.0a1.7,1.7 0 1,0 -3.4,0a1.7,1.7 0 1,0 3.4,0 M453.7,428.5a1.7,1.7 0 1,0 -3.4,0a1.7,1.7 0 1,0 3.4,0 M466.3,423.1a1.7,1.7 0 1,0 -3.4,0a1.7,1.7 0 1,0 3.4,0 M478.1,417.8a1.7,1.7 0 1,0 -3.4,0a1.7,1.7 0 1,0 3.4,0 M492.4,411.4a1.7,1.7 0 1,0 -3.4,0a1.7,1.7 0 1,0 3.4,0 M508.3,404.0a1.7,1.7 0 1,0 -3.4,0a1.7,1.7 0 1,0 3.4,0 M526.1,395.4a1.7,1.7 0 1,0 -3.4,0a1.7,1.7 0 1,0 3.4,0 M543.4,386.9a1.7,1.7 0 1,0 -3.4,0a1.7,1.7 0 1,0 3.4,0 M560.1,378.3a1.7,1.7 0 1,0 -3.4,0a1.7,1.7 0 1,0 3.4,0 M575.0,370.4a1.7,1.7 0 1,0 -3.4,0a1.7,1.7 0 1,0 3.4,0 M588.4,363.1a1.7,1.7 0 1,0 -3.4,0a1.7,1.7 0 1,0 3.4,0 M599.2,357.1a1.7,1.7 0 1,0 -3.4,0a1.7,1.7 0 1,0 3.4,0 M610.3,350.8a1.7,1.7 0 1,0 -3.4,0a1.7,1.7 0 1,0 3.4,0 M623.1,343.3a1.7,1.7 0 1,0 -3.4,0a1.7,1.7 0 1,0 3.4,0 M636.6,335.3a1.7,1.7 0 1,0 -3.4,0a1.7,1.7 0 1,0 3.4,0 M650.6,326.7a1.7,1.7 0 1,0 -3.4,0a1.7,1.7 0 1,0 3.4,0 M665.0,317.6a1.7,1.7 0 1,0 -3.4,0a1.7,1.7 0 1,0 3.4,0 M679.1,308.4a1.7,1.7 0 1,0 -3.4,0a1.7,1.7 0 1,0 3.4,0 M689.7,301.4a1.7,1.7 0 1,0 -3.4,0a1.7,1.7 0 1,0 3.4,0 M696.8,296.6a1.7,1.7 0 1,0 -3.4,0a1.7,1.7 0 1,0 3.4,0 M703.8,291.8a1.7,1.7 0 1,0 -3.4,0a1.7,1.7 0 1,0 3.4,0 M713.3,285.2a1.7,1.7 0 1,0 -3.4,0a1.7,1.7 0 1,0 3.4,0 M723.9,277.7a1.7,1.7 0 1,0 -3.4,0a1.7,1.7 0 1,0 3.4,0 M732.1,271.7a1.7,1.7 0 1,0 -3.4,0a1.7,1.7 0 1,0 3.4,0 M739.0,266.7a1.7,1.7 0 1,0 -3.4,0a1.7,1.7 0 1,0 3.4,0 M746.3,261.3a1.7,1.7 0 1,0 -3.4,0a1.7,1.7 0 1,0 3.4,0 M752.1,256.9a1.7,1.7 0 1,0 -3.4,0a1.7,1.7 0 1,0 3.4,0 M757.3,253.0a1.7,1.7 0 1,0 -3.4,0a1.7,1.7 0 1,0 3.4,0 M762.5,249.0a1.7,1.7 0 1,0 -3.4,0a1.7,1.7 0 1,0 3.4,0 M768.0,244.7a1.7,1.7 0 1,0 -3.4,0a1.7,1.7 0 1,0 3.4,0 M774.9,239.3a1.7,1.7 0 1,0 -3.4,0a1.7,1.7 0 1,0 3.4,0 M781.5,234.1a1.7,1.7 0 1,0 -3.4,0a1.7,1.7 0 1,0 3.4,0 M788.5,228.5a1.7,1.7 0 1,0 -3.4,0a1.7,1.7 0 1,0 3.4,0 M794.9,223.4a1.7,1.7 0 1,0 -3.4,0a1.7,1.7 0 1,0 3.4,0 M801.7,217.8a1.7,1.7 0 1,0 -3.4,0a1.7,1.7 0 1,0 3.4,0 M810.2,210.8a1.7,1.7 0 1,0 -3.4,0a1.7,1.7 0 1,0 3.4,0 M819.1,203.3a1.7,1.7 0 1,0 -3.4,0a1.7,1.7 0 1,0 3.4,0 M828.9,195.0a1.7,1.7 0 1,0 -3.4,0a1.7,1.7 0 1,0 3.4,0 M836.8,188.2a1.7,1.7 0 1,0 -3.4,0a1.7,1.7 0 1,0 3.4,0 M842.8,183.0a1.7,1.7 0 1,0 -3.4,0a1.7,1.7 0 1,0 3.4,0 M846.0,180.2a1.7,1.7 0 1,0 -3.4,0a1.7,1.7 0 1,0 3.4,0 M249.0,498.3a1.7,1.7 0 1,0 -3.4,0a1.7,1.7 0 1,0 3.4,0 M255.9,491.9a1.7,1.7 0 1,0 -3.4,0a1.7,1.7 0 1,0 3.4,0 M264.5,484.1a1.7,1.7 0 1,0 -3.4,0a1.7,1.7 0 1,0 3.4,0 M272.1,477.3a1.7,1.7 0 1,0 -3.4,0a1.7,1.7 0 1,0 3.4,0 M276.8,473.1a1.7,1.7 0 1,0 -3.4,0a1.7,1.7 0 1,0 3.4,0 M282.5,468.1a1.7,1.7 0 1,0 -3.4,0a1.7,1.7 0 1,0 3.4,0 M288.3,463.2a1.7,1.7 0 1,0 -3.4,0a1.7,1.7 0 1,0 3.4,0 M293.8,458.5a1.7,1.7 0 1,0 -3.4,0a1.7,1.7 0 1,0 3.4,0 M299.6,453.6a1.7,1.7 0 1,0 -3.4,0a1.7,1.7 0 1,0 3.4,0 M306.1,448.1a1.7,1.7 0 1,0 -3.4,0a1.7,1.7 0 1,0 3.4,0 M311.7,443.5a1.7,1.7 0 1,0 -3.4,0a1.7,1.7 0 1,0 3.4,0 M317.3,438.9a1.7,1.7 0 1,0 -3.4,0a1.7,1.7 0 1,0 3.4,0 M323.0,434.4a1.7,1.7 0 1,0 -3.4,0a1.7,1.7 0 1,0 3.4,0 M323.0,434.4a1.7,1.7 0 1,0 -3.4,0a1.7,1.7 0 1,0 3.4,0 M249.8,498.7a1.7,1.7 0 1,0 -3.4,0a1.7,1.7 0 1,0 3.4,0 M257.9,493.0a1.7,1.7 0 1,0 -3.4,0a1.7,1.7 0 1,0 3.4,0 M267.9,486.0a1.7,1.7 0 1,0 -3.4,0a1.7,1.7 0 1,0 3.4,0 M276.8,479.8a1.7,1.7 0 1,0 -3.4,0a1.7,1.7 0 1,0 3.4,0 M282.2,476.1a1.7,1.7 0 1,0 -3.4,0a1.7,1.7 0 1,0 3.4,0 M288.8,471.6a1.7,1.7 0 1,0 -3.4,0a1.7,1.7 0 1,0 3.4,0 M295.4,467.1a1.7,1.7 0 1,0 -3.4,0a1.7,1.7 0 1,0 3.4,0 M301.7,462.8a1.7,1.7 0 1,0 -3.4,0a1.7,1.7 0 1,0 3.4,0 M308.2,458.3a1.7,1.7 0 1,0 -3.4,0a1.7,1.7 0 1,0 3.4,0 M315.6,453.3a1.7,1.7 0 1,0 -3.4,0a1.7,1.7 0 1,0 3.4,0 M321.9,449.1a1.7,1.7 0 1,0 -3.4,0a1.7,1.7 0 1,0 3.4,0 M328.2,444.9a1.7,1.7 0 1,0 -3.4,0a1.7,1.7 0 1,0 3.4,0 M334.5,440.7a1.7,1.7 0 1,0 -3.4,0a1.7,1.7 0 1,0 3.4,0 M334.5,440.7a1.7,1.7 0 1,0 -3.4,0a1.7,1.7 0 1,0 3.4,0 M251.0,499.3a1.7,1.7 0 1,0 -3.4,0a1.7,1.7 0 1,0 3.4,0 M260.7,494.6a1.7,1.7 0 1,0 -3.4,0a1.7,1.7 0 1,0 3.4,0 M272.8,488.7a1.7,1.7 0 1,0 -3.4,0a1.7,1.7 0 1,0 3.4,0 M283.4,483.4a1.7,1.7 0 1,0 -3.4,0a1.7,1.7 0 1,0 3.4,0 M289.8,480.2a1.7,1.7 0 1,0 -3.4,0a1.7,1.7 0 1,0 3.4,0 M297.6,476.3a1.7,1.7 0 1,0 -3.4,0a1.7,1.7 0 1,0 3.4,0 M305.3,472.5a1.7,1.7 0 1,0 -3.4,0a1.7,1.7 0 1,0 3.4,0 M312.6,468.8a1.7,1.7 0 1,0 -3.4,0a1.7,1.7 0 1,0 3.4,0 M320.3,464.9a1.7,1.7 0 1,0 -3.4,0a1.7,1.7 0 1,0 3.4,0 M328.8,460.5a1.7,1.7 0 1,0 -3.4,0a1.7,1.7 0 1,0 3.4,0 M336.0,456.8a1.7,1.7 0 1,0 -3.4,0a1.7,1.7 0 1,0 3.4,0 M343.3,453.1a1.7,1.7 0 1,0 -3.4,0a1.7,1.7 0 1,0 3.4,0 M350.5,449.4a1.7,1.7 0 1,0 -3.4,0a1.7,1.7 0 1,0 3.4,0 M350.5,449.4a1.7,1.7 0 1,0 -3.4,0a1.7,1.7 0 1,0 3.4,0 M252.1,499.9a1.7,1.7 0 1,0 -3.4,0a1.7,1.7 0 1,0 3.4,0 M263.5,496.1a1.7,1.7 0 1,0 -3.4,0a1.7,1.7 0 1,0 3.4,0 M277.4,491.2a1.7,1.7 0 1,0 -3.4,0a1.7,1.7 0 1,0 3.4,0 M289.7,486.8a1.7,1.7 0 1,0 -3.4,0a1.7,1.7 0 1,0 3.4,0 M297.0,484.2a1.7,1.7 0 1,0 -3.4,0a1.7,1.7 0 1,0 3.4,0 M306.0,480.9a1.7,1.7 0 1,0 -3.4,0a1.7,1.7 0 1,0 3.4,0 M314.8,477.6a1.7,1.7 0 1,0 -3.4,0a1.7,1.7 0 1,0 3.4,0 M323.1,474.5a1.7,1.7 0 1,0 -3.4,0a1.7,1.7 0 1,0 3.4,0 M331.8,471.2a1.7,1.7 0 1,0 -3.4,0a1.7,1.7 0 1,0 3.4,0 M341.5,467.4a1.7,1.7 0 1,0 -3.4,0a1.7,1.7 0 1,0 3.4,0 M349.6,464.3a1.7,1.7 0 1,0 -3.4,0a1.7,1.7 0 1,0 3.4,0 M357.8,461.0a1.7,1.7 0 1,0 -3.4,0a1.7,1.7 0 1,0 3.4,0 M365.9,457.8a1.7,1.7 0 1,0 -3.4,0a1.7,1.7 0 1,0 3.4,0 M365.9,457.8a1.7,1.7 0 1,0 -3.4,0a1.7,1.7 0 1,0 3.4,0 M252.9,500.4a1.7,1.7 0 1,0 -3.4,0a1.7,1.7 0 1,0 3.4,0 M265.5,497.2a1.7,1.7 0 1,0 -3.4,0a1.7,1.7 0 1,0 3.4,0 M280.9,493.1a1.7,1.7 0 1,0 -3.4,0a1.7,1.7 0 1,0 3.4,0 M294.4,489.4a1.7,1.7 0 1,0 -3.4,0a1.7,1.7 0 1,0 3.4,0 M302.5,487.1a1.7,1.7 0 1,0 -3.4,0a1.7,1.7 0 1,0 3.4,0 M312.3,484.3a1.7,1.7 0 1,0 -3.4,0a1.7,1.7 0 1,0 3.4,0 M321.9,481.5a1.7,1.7 0 1,0 -3.4,0a1.7,1.7 0 1,0 3.4,0 M331.0,478.8a1.7,1.7 0 1,0 -3.4,0a1.7,1.7 0 1,0 3.4,0 M340.5,475.9a1.7,1.7 0 1,0 -3.4,0a1.7,1.7 0 1,0 3.4,0 M351.0,472.6a1.7,1.7 0 1,0 -3.4,0a1.7,1.7 0 1,0 3.4,0 M359.8,469.8a1.7,1.7 0 1,0 -3.4,0a1.7,1.7 0 1,0 3.4,0 M368.7,467.0a1.7,1.7 0 1,0 -3.4,0a1.7,1.7 0 1,0 3.4,0 M377.4,464.1a1.7,1.7 0 1,0 -3.4,0a1.7,1.7 0 1,0 3.4,0 M377.4,464.1a1.7,1.7 0 1,0 -3.4,0a1.7,1.7 0 1,0 3.4,0" fill="none" stroke="#5868d8" stroke-width="0.9"/>
<path d="M243.4,501.9 L248.1,496.9 L252.9,492.0 L257.6,487.2 L262.4,482.4 L267.1,477.7 L271.9,473.1 L276.6,468.5 L281.4,463.9 L286.1,459.5 L290.9,455.1 L295.6,450.7 L300.4,446.4 L305.1,442.1 L309.9,437.9 L314.6,433.8 L319.4,429.7 L324.1,425.7 L328.9,421.7 L333.6,417.7 L338.4,413.8 L343.1,409.9 L347.9,406.1 L352.6,402.3 L357.4,398.6 L362.1,394.9 L366.9,391.3 L371.6,387.7 L376.4,384.1 L381.1,380.6 L385.9,377.1 L390.6,373.6 L395.4,370.2 L400.1,366.8 L404.9,363.5 L409.6,360.2 L414.4,356.9 L419.1,353.7 L423.9,350.5 L428.6,347.3 L433.3,344.1 L438.1,341.0 L442.8,337.9 L447.6,334.9 L452.3,331.8 L457.1,328.8 L461.8,325.8 L466.6,322.9 L471.3,320.0 L476.1,317.1 L480.8,314.2 L485.6,311.3 L490.3,308.5 L495.1,305.7 L499.8,302.9 L504.6,300.2 L509.3,297.4 L514.1,294.7 L518.8,292.0 L523.6,289.3 L528.3,286.7 L533.1,284.1 L537.8,281.4 L542.6,278.9 L547.3,276.3 L552.1,273.7 L556.8,271.2 L561.6,268.7 L566.3,266.2 L571.1,263.7 L575.8,261.2 L580.6,258.8 L585.3,256.3 L590.1,253.9 L594.8,251.5 L599.6,249.1 L604.3,246.8 L609.1,244.4 L613.8,242.1 L618.6,239.8 L623.3,237.5 L628.0,235.2 L632.8,232.9 L637.5,230.6 L642.3,228.4 L647.0,226.2 L651.8,223.9 L656.5,221.7 L661.3,219.6 L666.0,217.4 L670.8,215.2 L675.5,213.1 L680.3,211.0 L685.0,208.9 L689.8,206.8 L694.5,204.7 L699.3,202.6 L704.0,200.6 L708.8,198.5 L713.5,196.5 L718.3,194.5 L723.0,192.5 L727.8,190.6 L732.5,188.6 L737.3,186.7 L742.0,184.7 L746.8,182.8 L751.5,180.9 L756.3,179.1 L761.0,177.2 L765.8,175.4 L770.5,173.6 L775.3,171.8 L780.0,170.0 L784.8,168.2 L789.5,166.5 L794.3,164.8 L799.0,163.1 L803.8,161.4 L808.5,159.7 L813.5,162.6 L818.4,165.2 L823.3,167.8 L828.1,170.5 L832.9,173.2 L837.7,175.9 L842.4,178.7 L847.0,181.5 L851.6,184.3" fill="none" stroke="#4a64e0" stroke-width="1"/>
<path d="M248.8,496.9a1.75,1.4875 0 1,0 -3.5,0a1.75,1.4875 0 1,0 3.5,0 M255.2,490.3a1.75,1.4875 0 1,0 -3.5,0a1.75,1.4875 0 1,0 3.5,0 M263.1,482.2a1.75,1.4875 0 1,0 -3.5,0a1.75,1.4875 0 1,0 3.5,0 M270.4,475.1a1.75,1.4875 0 1,0 -3.5,0a1.75,1.4875 0 1,0 3.5,0 M274.8,470.8a1.75,1.4875 0 1,0 -3.5,0a1.75,1.4875 0 1,0 3.5,0 M280.1,465.6a1.75,1.4875 0 1,0 -3.5,0a1.75,1.4875 0 1,0 3.5,0 M285.6,460.5a1.75,1.4875 0 1,0 -3.5,0a1.75,1.4875 0 1,0 3.5,0 M290.8,455.6a1.75,1.4875 0 1,0 -3.5,0a1.75,1.4875 0 1,0 3.5,0 M296.2,450.5a1.75,1.4875 0 1,0 -3.5,0a1.75,1.4875 0 1,0 3.5,0 M302.4,444.9a1.75,1.4875 0 1,0 -3.5,0a1.75,1.4875 0 1,0 3.5,0 M307.8,440.2a1.75,1.4875 0 1,0 -3.5,0a1.75,1.4875 0 1,0 3.5,0 M313.1,435.4a1.75,1.4875 0 1,0 -3.5,0a1.75,1.4875 0 1,0 3.5,0 M318.6,430.7a1.75,1.4875 0 1,0 -3.5,0a1.75,1.4875 0 1,0 3.5,0 M324.8,425.4a1.75,1.4875 0 1,0 -3.5,0a1.75,1.4875 0 1,0 3.5,0 M331.8,419.5a1.75,1.4875 0 1,0 -3.5,0a1.75,1.4875 0 1,0 3.5,0 M339.8,412.9a1.75,1.4875 0 1,0 -3.5,0a1.75,1.4875 0 1,0 3.5,0 M348.8,405.6a1.75,1.4875 0 1,0 -3.5,0a1.75,1.4875 0 1,0 3.5,0 M358.8,397.7a1.75,1.4875 0 1,0 -3.5,0a1.75,1.4875 0 1,0 3.5,0 M367.8,390.7a1.75,1.4875 0 1,0 -3.5,0a1.75,1.4875 0 1,0 3.5,0 M375.8,384.7a1.75,1.4875 0 1,0 -3.5,0a1.75,1.4875 0 1,0 3.5,0 M385.2,377.6a1.75,1.4875 0 1,0 -3.5,0a1.75,1.4875 0 1,0 3.5,0 M394.4,370.9a1.75,1.4875 0 1,0 -3.5,0a1.75,1.4875 0 1,0 3.5,0 M405.8,362.9a1.75,1.4875 0 1,0 -3.5,0a1.75,1.4875 0 1,0 3.5,0 M418.8,353.9a1.75,1.4875 0 1,0 -3.5,0a1.75,1.4875 0 1,0 3.5,0 M433.8,343.8a1.75,1.4875 0 1,0 -3.5,0a1.75,1.4875 0 1,0 3.5,0 M448.8,334.0a1.75,1.4875 0 1,0 -3.5,0a1.75,1.4875 0 1,0 3.5,0 M463.8,324.5a1.75,1.4875 0 1,0 -3.5,0a1.75,1.4875 0 1,0 3.5,0 M477.6,316.0a1.75,1.4875 0 1,0 -3.5,0a1.75,1.4875 0 1,0 3.5,0 M490.2,308.4a1.75,1.4875 0 1,0 -3.5,0a1.75,1.4875 0 1,0 3.5,0 M500.8,302.2a1.75,1.4875 0 1,0 -3.5,0a1.75,1.4875 0 1,0 3.5,0 M511.8,295.8a1.75,1.4875 0 1,0 -3.5,0a1.75,1.4875 0 1,0 3.5,0 M524.8,288.5a1.75,1.4875 0 1,0 -3.5,0a1.75,1.4875 0 1,0 3.5,0 M538.8,280.7a1.75,1.4875 0 1,0 -3.5,0a1.75,1.4875 0 1,0 3.5,0 M553.8,272.6a1.75,1.4875 0 1,0 -3.5,0a1.75,1.4875 0 1,0 3.5,0 M569.5,264.2a1.75,1.4875 0 1,0 -3.5,0a1.75,1.4875 0 1,0 3.5,0 M585.4,256.0a1.75,1.4875 0 1,0 -3.5,0a1.75,1.4875 0 1,0 3.5,0 M597.5,249.9a1.75,1.4875 0 1,0 -3.5,0a1.75,1.4875 0 1,0 3.5,0 M605.8,245.7a1.75,1.4875 0 1,0 -3.5,0a1.75,1.4875 0 1,0 3.5,0 M614.0,241.6a1.75,1.4875 0 1,0 -3.5,0a1.75,1.4875 0 1,0 3.5,0 M625.5,236.1a1.75,1.4875 0 1,0 -3.5,0a1.75,1.4875 0 1,0 3.5,0 M638.5,229.8a1.75,1.4875 0 1,0 -3.5,0a1.75,1.4875 0 1,0 3.5,0 M648.8,225.0a1.75,1.4875 0 1,0 -3.5,0a1.75,1.4875 0 1,0 3.5,0 M657.4,221.0a1.75,1.4875 0 1,0 -3.5,0a1.75,1.4875 0 1,0 3.5,0 M666.8,216.7a1.75,1.4875 0 1,0 -3.5,0a1.75,1.4875 0 1,0 3.5,0 M674.2,213.3a1.75,1.4875 0 1,0 -3.5,0a1.75,1.4875 0 1,0 3.5,0 M681.0,210.2a1.75,1.4875 0 1,0 -3.5,0a1.75,1.4875 0 1,0 3.5,0 M688.0,207.1a1.75,1.4875 0 1,0 -3.5,0a1.75,1.4875 0 1,0 3.5,0 M695.4,203.9a1.75,1.4875 0 1,0 -3.5,0a1.75,1.4875 0 1,0 3.5,0 M704.8,199.8a1.75,1.4875 0 1,0 -3.5,0a1.75,1.4875 0 1,0 3.5,0 M713.8,196.0a1.75,1.4875 0 1,0 -3.5,0a1.75,1.4875 0 1,0 3.5,0 M723.5,191.8a1.75,1.4875 0 1,0 -3.5,0a1.75,1.4875 0 1,0 3.5,0 M732.5,188.1a1.75,1.4875 0 1,0 -3.5,0a1.75,1.4875 0 1,0 3.5,0 M742.2,184.1a1.75,1.4875 0 1,0 -3.5,0a1.75,1.4875 0 1,0 3.5,0 M754.5,179.2a1.75,1.4875 0 1,0 -3.5,0a1.75,1.4875 0 1,0 3.5,0 M767.8,174.1a1.75,1.4875 0 1,0 -3.5,0a1.75,1.4875 0 1,0 3.5,0 M782.5,168.5a1.75,1.4875 0 1,0 -3.5,0a1.75,1.4875 0 1,0 3.5,0 M794.8,164.0a1.75,1.4875 0 1,0 -3.5,0a1.75,1.4875 0 1,0 3.5,0 M804.0,160.7a1.75,1.4875 0 1,0 -3.5,0a1.75,1.4875 0 1,0 3.5,0 M810.8,158.7a1.75,1.4875 0 1,0 -3.5,0a1.75,1.4875 0 1,0 3.5,0 M816.8,162.2a1.75,1.4875 0 1,0 -3.5,0a1.75,1.4875 0 1,0 3.5,0 M825.2,167.2a1.75,1.4875 0 1,0 -3.5,0a1.75,1.4875 0 1,0 3.5,0 M839.2,175.2a1.75,1.4875 0 1,0 -3.5,0a1.75,1.4875 0 1,0 3.5,0 M847.2,180.2a1.75,1.4875 0 1,0 -3.5,0a1.75,1.4875 0 1,0 3.5,0 M853.2,183.7a1.75,1.4875 0 1,0 -3.5,0a1.75,1.4875 0 1,0 3.5,0" fill="#0a0a0a"/>
<path d="M243.4,502.3 L248.1,501.3 L252.8,500.3 L257.5,499.3 L262.3,498.2 L267.0,497.1 L271.7,496.1 L276.4,495.0 L281.1,493.8 L285.8,492.7 L290.5,491.6 L295.3,490.4 L300.0,489.3 L304.7,488.1 L309.4,486.9 L314.1,485.7 L318.8,484.4 L323.6,483.2 L328.3,481.9 L333.0,480.7 L337.7,479.4 L342.4,478.1 L347.1,476.8 L351.8,475.4 L356.6,474.1 L361.3,472.7 L366.0,471.3 L370.7,469.9 L375.4,468.5 L380.1,467.1 L384.8,465.6 L389.6,464.2 L394.3,462.7 L399.0,461.2 L403.7,459.7 L408.4,458.2 L413.1,456.6 L417.8,455.0 L422.6,453.4 L427.3,451.8 L432.0,450.2 L436.7,448.6 L441.4,446.9 L446.1,445.2 L450.8,443.5 L455.6,441.8 L460.3,440.1 L465.0,438.3 L469.7,436.5 L474.4,434.7 L479.1,432.9 L483.9,431.1 L488.6,429.2 L493.3,427.3 L498.0,425.4 L502.7,423.4 L507.4,421.5 L512.1,419.5 L516.9,417.5 L521.6,415.5 L526.3,413.4 L531.0,411.3 L535.7,409.2 L540.4,407.1 L545.1,404.9 L549.9,402.7 L554.6,400.5 L559.3,398.3 L564.0,396.0 L568.7,393.7 L573.4,391.4 L578.1,389.1 L582.9,386.7 L587.6,384.3 L592.3,381.8 L597.0,379.3 L601.7,376.8 L606.4,374.3 L611.1,371.7 L615.9,369.1 L620.6,366.5 L625.3,363.8 L630.0,361.1 L634.7,358.4 L639.4,355.6 L644.2,352.8 L648.9,349.9 L653.6,347.1 L658.3,344.1 L663.0,341.2 L667.7,338.2 L672.4,335.1 L677.2,332.1 L681.9,328.9 L686.6,325.8 L691.3,322.6 L696.0,319.4 L700.7,316.1 L705.4,312.7 L710.2,309.4 L714.9,306.0 L719.6,302.5 L724.3,299.0 L729.0,295.4 L733.7,291.8 L738.4,288.2 L743.2,284.5 L747.9,280.8 L752.6,277.0 L757.3,273.1 L762.0,269.2 L766.7,265.3 L771.4,261.3 L776.2,257.2 L780.9,253.1 L785.6,249.0 L790.3,244.8 L795.0,240.5 L799.7,236.2 L804.5,231.8 L809.2,227.3 L813.9,222.9 L818.6,218.3 L823.3,213.7 L828.0,209.0 L832.7,204.2 L837.5,199.4 L842.2,194.6 L846.9,189.6 L851.6,184.6" fill="none" stroke="#e6cf1a" stroke-width="1.1"/>
<path d="M253.4,500.6a1.9,1.9 0 1,0 -3.8,0a1.9,1.9 0 1,0 3.8,0 M260.0,499.1a1.9,1.9 0 1,0 -3.8,0a1.9,1.9 0 1,0 3.8,0 M266.6,497.7a1.9,1.9 0 1,0 -3.8,0a1.9,1.9 0 1,0 3.8,0 M274.6,495.8a1.9,1.9 0 1,0 -3.8,0a1.9,1.9 0 1,0 3.8,0 M282.6,493.9a1.9,1.9 0 1,0 -3.8,0a1.9,1.9 0 1,0 3.8,0 M289.6,492.2a1.9,1.9 0 1,0 -3.8,0a1.9,1.9 0 1,0 3.8,0 M296.7,490.5a1.9,1.9 0 1,0 -3.8,0a1.9,1.9 0 1,0 3.8,0 M300.9,489.5a1.9,1.9 0 1,0 -3.8,0a1.9,1.9 0 1,0 3.8,0 M305.1,488.5a1.9,1.9 0 1,0 -3.8,0a1.9,1.9 0 1,0 3.8,0 M310.2,487.2a1.9,1.9 0 1,0 -3.8,0a1.9,1.9 0 1,0 3.8,0 M315.3,485.9a1.9,1.9 0 1,0 -3.8,0a1.9,1.9 0 1,0 3.8,0 M320.3,484.6a1.9,1.9 0 1,0 -3.8,0a1.9,1.9 0 1,0 3.8,0 M325.3,483.2a1.9,1.9 0 1,0 -3.8,0a1.9,1.9 0 1,0 3.8,0 M330.0,482.0a1.9,1.9 0 1,0 -3.8,0a1.9,1.9 0 1,0 3.8,0 M334.7,480.7a1.9,1.9 0 1,0 -3.8,0a1.9,1.9 0 1,0 3.8,0 M344.6,478.0a1.9,1.9 0 1,0 -3.8,0a1.9,1.9 0 1,0 3.8,0 M355.4,474.9a1.9,1.9 0 1,0 -3.8,0a1.9,1.9 0 1,0 3.8,0 M364.6,472.3a1.9,1.9 0 1,0 -3.8,0a1.9,1.9 0 1,0 3.8,0 M373.7,469.6a1.9,1.9 0 1,0 -3.8,0a1.9,1.9 0 1,0 3.8,0 M382.8,466.9a1.9,1.9 0 1,0 -3.8,0a1.9,1.9 0 1,0 3.8,0 M392.9,463.7a1.9,1.9 0 1,0 -3.8,0a1.9,1.9 0 1,0 3.8,0 M404.2,460.1a1.9,1.9 0 1,0 -3.8,0a1.9,1.9 0 1,0 3.8,0 M416.8,456.0a1.9,1.9 0 1,0 -3.8,0a1.9,1.9 0 1,0 3.8,0 M430.6,451.4a1.9,1.9 0 1,0 -3.8,0a1.9,1.9 0 1,0 3.8,0 M445.5,446.1a1.9,1.9 0 1,0 -3.8,0a1.9,1.9 0 1,0 3.8,0 M458.6,441.4a1.9,1.9 0 1,0 -3.8,0a1.9,1.9 0 1,0 3.8,0 M469.9,437.2a1.9,1.9 0 1,0 -3.8,0a1.9,1.9 0 1,0 3.8,0 M483.1,432.1a1.9,1.9 0 1,0 -3.8,0a1.9,1.9 0 1,0 3.8,0 M495.5,427.2a1.9,1.9 0 1,0 -3.8,0a1.9,1.9 0 1,0 3.8,0 M510.3,421.1a1.9,1.9 0 1,0 -3.8,0a1.9,1.9 0 1,0 3.8,0 M526.8,414.0a1.9,1.9 0 1,0 -3.8,0a1.9,1.9 0 1,0 3.8,0 M545.2,405.8a1.9,1.9 0 1,0 -3.8,0a1.9,1.9 0 1,0 3.8,0 M562.9,397.5a1.9,1.9 0 1,0 -3.8,0a1.9,1.9 0 1,0 3.8,0 M580.0,389.1a1.9,1.9 0 1,0 -3.8,0a1.9,1.9 0 1,0 3.8,0 M595.1,381.3a1.9,1.9 0 1,0 -3.8,0a1.9,1.9 0 1,0 3.8,0 M608.7,374.1a1.9,1.9 0 1,0 -3.8,0a1.9,1.9 0 1,0 3.8,0 M619.5,368.1a1.9,1.9 0 1,0 -3.8,0a1.9,1.9 0 1,0 3.8,0 M630.7,361.8a1.9,1.9 0 1,0 -3.8,0a1.9,1.9 0 1,0 3.8,0 M643.4,354.3a1.9,1.9 0 1,0 -3.8,0a1.9,1.9 0 1,0 3.8,0 M656.8,346.2a1.9,1.9 0 1,0 -3.8,0a1.9,1.9 0 1,0 3.8,0 M670.7,337.5a1.9,1.9 0 1,0 -3.8,0a1.9,1.9 0 1,0 3.8,0 M684.8,328.3a1.9,1.9 0 1,0 -3.8,0a1.9,1.9 0 1,0 3.8,0 M698.6,318.9a1.9,1.9 0 1,0 -3.8,0a1.9,1.9 0 1,0 3.8,0 M708.8,311.7a1.9,1.9 0 1,0 -3.8,0a1.9,1.9 0 1,0 3.8,0 M715.6,306.8a1.9,1.9 0 1,0 -3.8,0a1.9,1.9 0 1,0 3.8,0 M722.4,301.8a1.9,1.9 0 1,0 -3.8,0a1.9,1.9 0 1,0 3.8,0 M731.5,295.0a1.9,1.9 0 1,0 -3.8,0a1.9,1.9 0 1,0 3.8,0 M741.6,287.2a1.9,1.9 0 1,0 -3.8,0a1.9,1.9 0 1,0 3.8,0 M749.4,281.0a1.9,1.9 0 1,0 -3.8,0a1.9,1.9 0 1,0 3.8,0 M755.9,275.8a1.9,1.9 0 1,0 -3.8,0a1.9,1.9 0 1,0 3.8,0 M762.8,270.2a1.9,1.9 0 1,0 -3.8,0a1.9,1.9 0 1,0 3.8,0 M768.2,265.6a1.9,1.9 0 1,0 -3.8,0a1.9,1.9 0 1,0 3.8,0 M773.1,261.5a1.9,1.9 0 1,0 -3.8,0a1.9,1.9 0 1,0 3.8,0 M778.0,257.3a1.9,1.9 0 1,0 -3.8,0a1.9,1.9 0 1,0 3.8,0 M783.1,252.9a1.9,1.9 0 1,0 -3.8,0a1.9,1.9 0 1,0 3.8,0 M789.5,247.2a1.9,1.9 0 1,0 -3.8,0a1.9,1.9 0 1,0 3.8,0 M795.6,241.7a1.9,1.9 0 1,0 -3.8,0a1.9,1.9 0 1,0 3.8,0 M802.1,235.8a1.9,1.9 0 1,0 -3.8,0a1.9,1.9 0 1,0 3.8,0 M807.9,230.3a1.9,1.9 0 1,0 -3.8,0a1.9,1.9 0 1,0 3.8,0 M814.1,224.5a1.9,1.9 0 1,0 -3.8,0a1.9,1.9 0 1,0 3.8,0 M821.8,217.0a1.9,1.9 0 1,0 -3.8,0a1.9,1.9 0 1,0 3.8,0 M829.8,209.1a1.9,1.9 0 1,0 -3.8,0a1.9,1.9 0 1,0 3.8,0 M838.6,200.2a1.9,1.9 0 1,0 -3.8,0a1.9,1.9 0 1,0 3.8,0 M845.7,192.9a1.9,1.9 0 1,0 -3.8,0a1.9,1.9 0 1,0 3.8,0 M850.9,187.4a1.9,1.9 0 1,0 -3.8,0a1.9,1.9 0 1,0 3.8,0" fill="#9aaae8" stroke="#4a5ed8" stroke-width="0.9"/>
<path d="M310.0,514.0l7,3.5v15l-7,-3.5z" fill="none" stroke="#38e0e8" stroke-width="1"/>
<path d="M366.5,481.0l7,3.5v15l-7,-3.5z" fill="none" stroke="#38e0e8" stroke-width="1"/>
<path d="M424.0,448.0l7,3.5v15l-7,-3.5z" fill="none" stroke="#38e0e8" stroke-width="1"/>
<path d="M482.0,414.0l7,3.5v15l-7,-3.5z" fill="none" stroke="#38e0e8" stroke-width="1"/>
<path d="M539.0,382.0l7,3.5v15l-7,-3.5z" fill="none" stroke="#38e0e8" stroke-width="1"/>
<path d="M597.0,349.0l7,3.5v15l-7,-3.5z" fill="none" stroke="#40e0b0" stroke-width="1"/>
<path d="M654.0,315.0l7,3.5v15l-7,-3.5z" fill="none" stroke="#40e0b0" stroke-width="1"/>
<path d="M711.5,283.0l7,3.5v15l-7,-3.5z" fill="none" stroke="#40e0b0" stroke-width="1"/>
<path d="M769.0,250.0l7,3.5v15l-7,-3.5z" fill="none" stroke="#40e0b0" stroke-width="1"/>
<path d="M254.5,536v30l6,3v-30" fill="none" stroke="#30e8f0" stroke-width="1.2"/>
<path d="M334,480.4 C332,497.6 346,503.6 360,503.6 S380,479.7 378,467.7 M405,459.3 C403,469.4 417,475.4 431,475.4 S451,456.2 449,444.2 M430,450.9 C428,459.7 442,465.7 456,465.7 S476,446.9 474,434.9 M488,429.4 C486,436.7 500,442.7 514,442.7 S534,422.9 532,410.9 M554,400.8 C552,404.6 566,410.6 580,410.6 S600,390.8 598,378.8 M601,377.2 C599,376.5 613,382.5 627,382.5 S647,364.3 645,352.3 M660,343.1 C658,336.6 672,342.6 686,342.6 S706,325.8 704,313.8 M718,303.7 C716,290.2 730,296.2 744,296.2 S764,281.3 762,269.3" fill="none" stroke="#a8a8b0" stroke-width="0.6" opacity="0.75"/>
<path d="M258,537 L316.7,517 L369,489.5 L426.5,458.8 L488,428.7 L539,398.5 L600,362 L657,328 L715,294 L772,262 L805,241" fill="none" stroke="#a8a8b0" stroke-width="0.7" opacity="0.8"/>
<path d="M259,539 L257,503" fill="none" stroke="#a8a8b0" stroke-width="0.8"/>
<path d="M253,535l10,10M263,535l-10,10M258,533v14M251,540h14" stroke="#909098" stroke-width="0.7"/>
<path d="M262.5,475v7M265,476v6M267.5,476v6" stroke="#333" stroke-width="0.8"/><path d="M252,489q0-4 4-4t5,2l-2,3q-3-2-7-1z" fill="#fff" stroke="#222" stroke-width="0.8"/>
<path d="M830,231V212" stroke="#80e080" stroke-width="1"/><path d="M830,231L812,241" stroke="#40a0f0" stroke-width="1"/><path d="M830,231L848,241" stroke="#f08080" stroke-width="1"/><path d="M826,229h8v6h-8z" fill="none" stroke="#f0a0a0" stroke-width="0.8"/><path d="M830,226l4,4-4,4-4-4z" fill="none" stroke="#80e080" stroke-width="0.8"/>
<path d="M15.5,141.3L219,163M15.5,141.3L41,140.4M15.5,141.3L41.8,148.3" stroke="#f01818" stroke-width="1.6" fill="none"/>
<path d="M216,590V566" stroke="#78c878" stroke-width="3"/><path d="M212.5,569l3.5-10 3.5,10-3.5-2z" fill="#70c470"/><text x="212" y="557" font-size="8.5" fill="#80c880" font-family="Liberation Serif">Y</text>
<path d="M216,591L237,603" stroke="#f07070" stroke-width="3"/><path d="M232,604l11,3-7,-8z" fill="#f06868"/><text x="245" y="613" font-size="8.5" fill="#f07070" font-family="Liberation Serif">X</text>
<path d="M216,591L195,603" stroke="#6a98e8" stroke-width="3"/><path d="M200,604l-11,3 7,-8z" fill="#5a90f0"/><text x="182" y="613" font-size="8.5" fill="#5a90f0" font-family="Liberation Serif">Z</text>
<rect x="211.5" y="587" width="9" height="8" rx="2.5" fill="#7878e0"/>
</svg>
<div class="a tx" style="left:229.5px;top:153.9px;font-size:11.4px;color:#f02a2a">выбираем направление перемещения.</div>
<div class="a" style="left:166px;top:643px;width:744px;height:2px;background:#d4d2b8"></div>
<div class="a pat" style="left:0;top:644px;width:910px;height:49px"></div>
<div class="a" style="left:20px;top:652px;width:2px;height:40px;background:repeating-linear-gradient(#999 0 1px,transparent 1px 3px)"></div>
<div class="a" style="left:21px;top:651px;width:34px;height:42px;background:#fbfbfc"></div>
<svg class="a" style="left:25px;top:654px;" width="12" height="7" viewBox="0 0 12 7"><path d="M11,0v4h-9" stroke="#1020d0" stroke-width="1.6" fill="none"/><path d="M0,4l4-3v6z" fill="#1020d0"/></svg>
<svg class="a" style="left:41px;top:653px;" width="12" height="12" viewBox="0 0 12 12"><path d="M3.5,0h5l3.5,3.5v5l-3.5,3.5h-5l-3.5-3.5v-5z" fill="#f01818"/><text x="1.2" y="7.8" font-size="4" fill="#fff" font-weight="bold" font-family="Liberation Sans">STOP</text></svg>
<svg class="a" style="left:57px;top:654px;" width="10" height="10" viewBox="0 0 10 10"><rect x="0.5" y="0.5" width="9" height="9" fill="#fff" stroke="#333"/><path d="M1.5,1.5h3v1.5h-1.5v1.5h-1.5zM8.5,1.5h-3v1.5h1.5v1.5h1.5zM1.5,8.5h3v-1.5h-1.5v-1.5h-1.5zM8.5,8.5h-3v-1.5h1.5v-1.5h1.5z" fill="#333"/></svg>
<svg class="a" style="left:25px;top:668px;" width="12" height="9" viewBox="0 0 12 9"><path d="M0,4l6-4 6,4-6,4z" fill="#2a9ae8" stroke="#1050b0"/><path d="M0,6l6,3 6-3" stroke="#1050b0" fill="none"/></svg>
<svg class="a" style="left:42px;top:668px;" width="9" height="11" viewBox="0 0 9 11"><rect x="0.5" y="0.5" width="8" height="8" fill="#fff" stroke="#333"/><text x="2" y="7.5" font-size="8" font-weight="bold" fill="#1030a0" font-family="Liberation Sans">?</text><path d="M5,8.5l1,2.5 1-2.5" fill="#333"/></svg>
<div class="a" style="left:72px;top:651px;width:833px;height:24px;background:#fcfcfa;border:1px solid #cfcbb0;box-shadow:inset 1px 1px 0 #b0ac98"></div>
<div class="a" style="left:0px;top:693px;width:910px;height:13px;background:#eceef0;border-top:1px solid #b8bcc2"></div>
<div class="a" style="left:848px;top:694px;width:1px;height:12px;background:#b0b4ba"></div>
<div class="a tx" style="left:4px;top:697px;font-size:8.05px;color:#333;letter-spacing:-0.1px">Переместите полюс (ряд полюсов) мышью. Для выделения полюса (ряда полюсов) щелкните по нему мышью, удерживая Ctrl</div>
<div class="a" style="left:0px;top:706px;width:910px;height:22px;background:linear-gradient(#4a8cfa,#2d68e6 18%,#2a64e2 80%,#2050c8)"></div>
<div class="a" style="left:0px;top:706px;width:67px;height:22px;background:linear-gradient(#5cb85c,#3c983c 20%,#348c34 80%,#2a6e2a);border-radius:0 10px 10px 0"></div>
<svg class="a" style="left:7px;top:710px;" width="14" height="14" viewBox="0 0 14 14"><path d="M1,2q3-2 6,0v5q-3-2-6,0z" fill="#f04020"/><path d="M7,2q3-2 6,0v5q-3-2-6,0z" fill="#40b020"/><path d="M1,7q3-2 6,0v5q-3-2-6,0z" fill="#2060f0"/><path d="M7,7q3-2 6,0v5q-3-2-6,0z" fill="#f0c020"/></svg>
<div class="a tx" style="left:25px;top:710px;font-size:13px;color:#fff;font-weight:bold;font-style:italic">пуск</div>
<svg class="a" style="left:76px;top:710px;" width="13" height="13" viewBox="0 0 13 13"><path d="M3,7h7.5a4,4 0 1,0 -1,3" fill="none" stroke="#7cc0ff" stroke-width="2.2"/><path d="M3,7h7.5" stroke="#7cc0ff" stroke-width="1.6"/><ellipse cx="6.5" cy="6.5" rx="6.2" ry="2.4" fill="none" stroke="#e8b820" stroke-width="1.1" transform="rotate(-35 6.5 6.5)"/></svg>
<svg class="a" style="left:92px;top:710px;" width="13" height="13" viewBox="0 0 13 13"><circle cx="6.5" cy="6.5" r="5.5" fill="#f4f4f4" stroke="#3a80d0" stroke-width="1.5"/><path d="M5,4l4,2.5-4,2.5z" fill="#1a50b0"/></svg>
<svg class="a" style="left:109px;top:710px;" width="13" height="13" viewBox="0 0 13 13"><circle cx="6.5" cy="6.5" r="5.5" fill="#8ac8e8" stroke="#c8e8f8"/><text x="2" y="8.5" font-size="5" fill="#fff" font-family="Liberation Sans">121</text></svg>
<svg class="a" style="left:125.5px;top:710px;" width="13" height="13" viewBox="0 0 13 13"><circle cx="6.5" cy="7.5" r="5" fill="#f09020"/><path d="M3,3q3.5-3 7,0" stroke="#f8d060" stroke-width="1.5" fill="none"/><circle cx="5" cy="6" r="1.5" fill="#ffd080"/></svg>
<svg class="a" style="left:142px;top:710px;" width="13" height="13" viewBox="0 0 13 13"><path d="M2,11l4-4" stroke="#e8c020" stroke-width="2"/><circle cx="8" cy="5" r="4" fill="#30a040"/><circle cx="8" cy="5" r="1.7" fill="#4080e0"/></svg>
<svg class="a" style="left:158px;top:710px;" width="13" height="13" viewBox="0 0 13 13"><path d="M1,6l4-5 3,3 4-2-2,6 3,3-5,1-2,-2-4,2z" fill="#20a020" stroke="#106010" stroke-width="0.6"/></svg>
<svg class="a" style="left:174.5px;top:710px;" width="13" height="13" viewBox="0 0 13 13"><rect x="1.5" y="2" width="9" height="10" fill="#f8f0c0" stroke="#807040"/><path d="M3,5h5M3,7h5M3,9h5" stroke="#70a040" stroke-width="0.8"/><path d="M9,1l3,1-3,4z" fill="#e04040"/></svg>
<svg class="a" style="left:190.5px;top:710px;" width="13" height="13" viewBox="0 0 13 13"><rect x="2" y="2" width="9" height="10" fill="#f0d860" stroke="#806020"/><rect x="3" y="3" width="7" height="3" fill="#f8f0a0"/></svg>
<svg class="a" style="left:207px;top:710px;" width="13" height="13" viewBox="0 0 13 13"><path d="M3,12V3" stroke="#404860" stroke-width="1.5"/><path d="M3,2l8,-1-2,4 2,3-8,1z" fill="#d0d8e8" stroke="#405080" stroke-width="0.7"/></svg>
<svg class="a" style="left:223px;top:710px;" width="13" height="13" viewBox="0 0 13 13"><circle cx="7.5" cy="7" r="3.5" fill="#f08020"/><circle cx="7.5" cy="7" r="1.5" fill="#2050a0"/><path d="M1,8l5-4M1,5h5" stroke="#f08020" stroke-width="1.3"/></svg>
<svg class="a" style="left:239.5px;top:710px;" width="13" height="13" viewBox="0 0 13 13"><circle cx="6.5" cy="6.5" r="5.5" fill="#4a90e0"/><circle cx="6.5" cy="6.5" r="4" fill="none" stroke="#fff"/><path d="M5,3.5v6M5,6.5l3-3M5.5,6l3,3.5" stroke="#fff" stroke-width="1" fill="none"/></svg>
<svg class="a" style="left:256px;top:710px;" width="13" height="13" viewBox="0 0 13 13"><circle cx="6.5" cy="6.5" r="5.5" fill="#40a840"/><path d="M6.5,1a5.5,5.5 0 0,1 4.8,2.8L6.5,6.5z" fill="#e03a30"/><path d="M11.3,3.8a5.5,5.5 0 0,1-2,7.5L6.5,6.5z" fill="#f8c820"/><circle cx="6.5" cy="6.5" r="2.6" fill="#fff"/><circle cx="6.5" cy="6.5" r="1.9" fill="#3a78e0"/></svg>
<div class="a" style="left:391px;top:709px;width:111px;height:17px;background:linear-gradient(#1e4cc0,#2458d0 30%,#2a60d8);border:1px solid #1a40a0;border-radius:2px;box-shadow:inset 1px 1px 1px #12389a"></div>
<svg class="a" style="left:396px;top:712px;" width="12" height="12" viewBox="0 0 12 12"><circle cx="6" cy="6" r="5.5" fill="#4a90e0" stroke="#c8e0ff" stroke-width="0.8"/><path d="M4.5,3v6M4.5,6l3-3M5,5.5l3,3.5" stroke="#fff" stroke-width="1" fill="none"/></svg>
<div class="a tx" style="left:411px;top:714px;font-size:8.3px;color:#fff;transform:scaleX(.93);transform-origin:0 0">КОМПАС-3D V15 Ho...</div>
<div class="a" style="left:504px;top:709px;width:113px;height:17px;background:linear-gradient(#5a9af8,#3c80f0 30%,#3a7ae8);border:1px solid #2a60c8;border-radius:2px"></div>
<svg class="a" style="left:508px;top:712px;" width="12" height="12" viewBox="0 0 12 12"><circle cx="6" cy="6" r="5.5" fill="#40a840"/><path d="M6,0.5a5.5,5.5 0 0,1 4.8,2.8L6,6z" fill="#e03a30"/><path d="M10.8,3.3a5.5,5.5 0 0,1-2,7.5L6,6z" fill="#f8c820"/><circle cx="6" cy="6" r="2.5" fill="#fff"/><circle cx="6" cy="6" r="1.8" fill="#3a78e0"/></svg>
<div class="a tx" style="left:524px;top:714px;font-size:8.3px;color:#fff;transform:scaleX(.93);transform-origin:0 0">Моделирование кор...</div>
<div class="a tx" style="left:786px;top:713px;font-size:8.6px;color:#fff">RL</div>
<div class="a" style="left:806px;top:706px;width:104px;height:22px;background:linear-gradient(#20a8f0,#1088e0 20%,#1890e8 80%,#1070c0);border-left:1px solid #0a50a0"></div>
<svg class="a" style="left:810px;top:708px;" width="70" height="16" viewBox="0 0 70 16"><path d="M3,14V2" stroke="#208020" stroke-width="1.5"/><path d="M3,2q4-2 9,1v6q-5-3-9-1z" fill="#50d040"/><circle cx="22" cy="4" r="2.5" fill="#c03030"/><path d="M18,14l4-8 4,8M17,9h10" stroke="#2040f0" stroke-width="2" fill="none"/><rect x="33" y="4" width="5" height="9" fill="#f0a020"/><rect x="38" y="6" width="5" height="7" fill="#2080e0"/><circle cx="50" cy="9" r="4.5" fill="#a0a0a8" stroke="#606068"/><rect x="57" y="7" width="11" height="7" fill="#60c040" stroke="#306020"/></svg>
<div class="a tx" style="left:880px;top:709px;font-size:8px;color:#e8f0ff">23:01</div>
<div class="a tx" style="left:840px;top:715px;font-size:10.5px;color:#fff;font-weight:bold;letter-spacing:-0.1px;text-shadow:1px 1px 0 #000,-1px -1px 0 #000,1px -1px 0 #000,-1px 1px 0 #000">www.tugun.ru</div>
</body></html>
